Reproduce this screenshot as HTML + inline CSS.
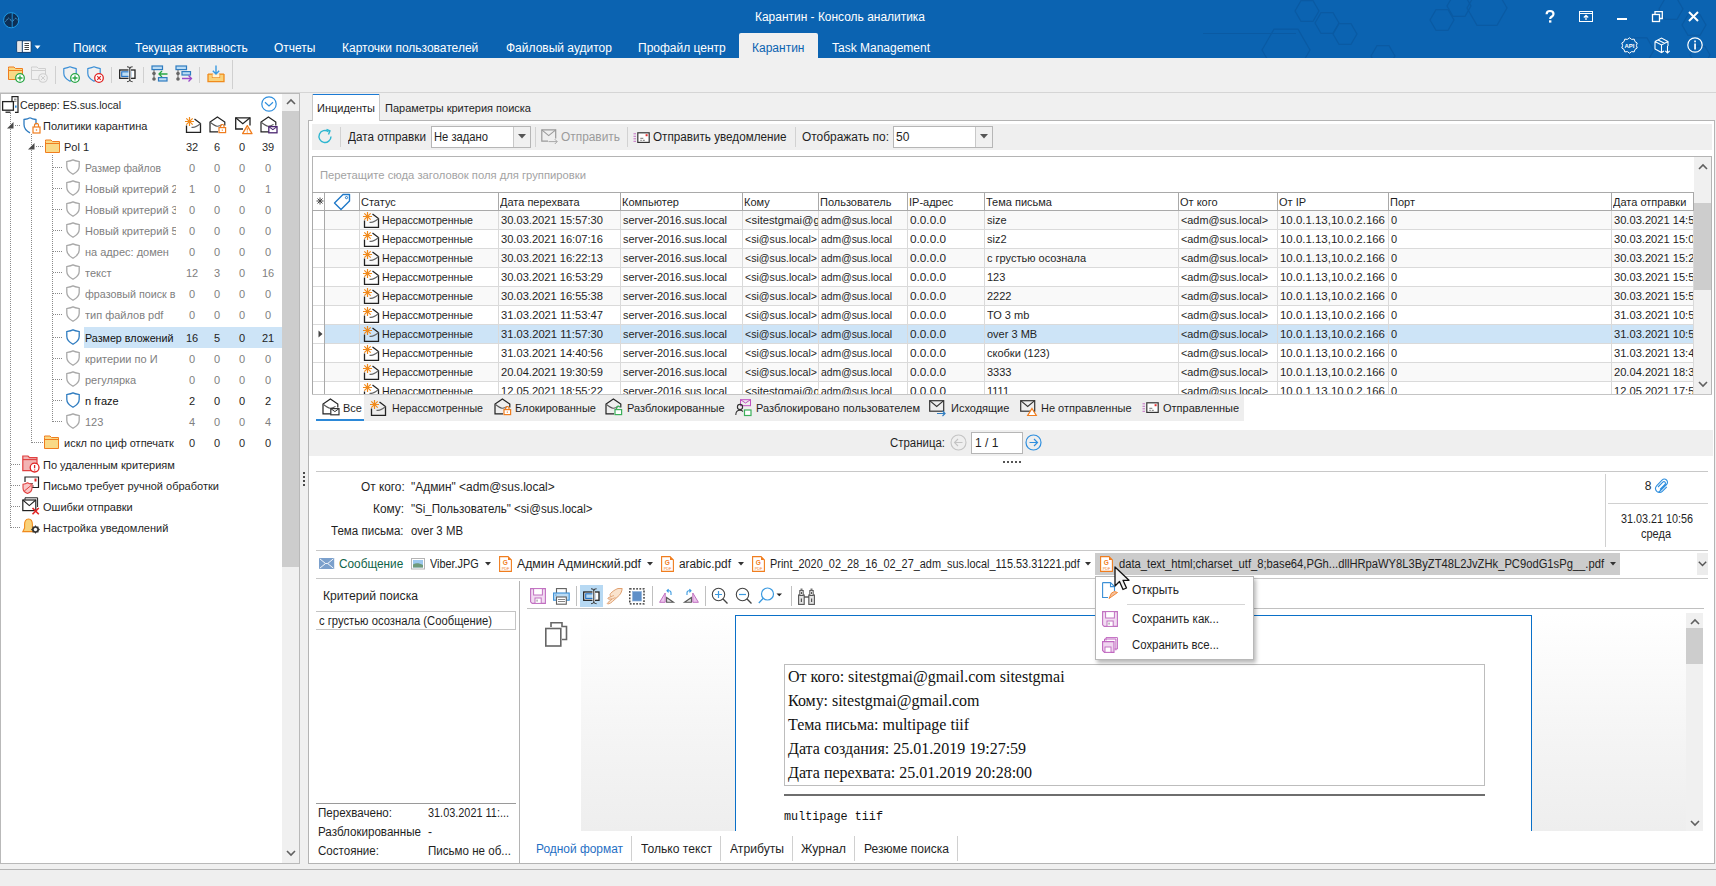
<!DOCTYPE html><html><head><meta charset="utf-8"><title>Карантин - Консоль аналитика</title><style>
*{margin:0;padding:0;box-sizing:border-box}
html,body{width:1716px;height:886px;overflow:hidden;background:#f0f0f0;font-family:"Liberation Sans",sans-serif}
.a{position:absolute}
.t{position:absolute;white-space:pre;line-height:1;transform-origin:0 0}
svg.a{overflow:visible}
</style></head><body><div class="a" style="left:0px;top:0px;width:1716px;height:58px;background:#0b63b1"></div>
<svg class="a" style="left:0;top:0" width="1716" height="58"><g fill="none" stroke="#0a5aa3" stroke-width="1.2"><path d="M1319.0,11.0 L1313.0,21.4 L1301.0,21.4 L1295.0,11.0 L1301.0,0.6 L1313.0,0.6 Z"/><path d="M1339.0,23.0 L1333.0,33.4 L1321.0,33.4 L1315.0,23.0 L1321.0,12.6 L1333.0,12.6 Z"/><path d="M1357.0,34.0 L1351.0,44.4 L1339.0,44.4 L1333.0,34.0 L1339.0,23.6 L1351.0,23.6 Z"/><path d="M1310.0,50.0 L1298.0,70.8 L1274.0,70.8 L1262.0,50.0 L1274.0,29.2 L1298.0,29.2 Z"/><path d="M1395.0,56.0 L1389.0,66.4 L1377.0,66.4 L1371.0,56.0 L1377.0,45.6 L1389.0,45.6 Z"/><path d="M1454.0,20.0 L1448.0,30.4 L1436.0,30.4 L1430.0,20.0 L1436.0,9.6 L1448.0,9.6 Z"/><path d="M1471.0,6.0 L1465.0,16.4 L1453.0,16.4 L1447.0,6.0 L1453.0,-4.4 L1465.0,-4.4 Z"/><path d="M1507.0,8.0 L1497.0,25.3 L1477.0,25.3 L1467.0,8.0 L1477.0,-9.3 L1497.0,-9.3 Z"/><path d="M1683.0,9.0 L1677.0,19.4 L1665.0,19.4 L1659.0,9.0 L1665.0,-1.4 L1677.0,-1.4 Z"/><path d="M1706.0,25.0 L1700.0,35.4 L1688.0,35.4 L1682.0,25.0 L1688.0,14.6 L1700.0,14.6 Z"/><path d="M1654.0,50.0 L1647.0,62.1 L1633.0,62.1 L1626.0,50.0 L1633.0,37.9 L1647.0,37.9 Z"/><path d="M1710.0,55.0 L1705.0,63.7 L1695.0,63.7 L1690.0,55.0 L1695.0,46.3 L1705.0,46.3 Z"/><path d="M1203 33.5 L1296 33.5"/></g></svg>
<svg class="a" style="left:2px;top:11px;" width="18" height="18" viewBox="0 0 18 18"><circle cx="9.2" cy="9.2" r="7.6" fill="#0d2f55" stroke="#1e9be8" stroke-width="1"/><path d="M10.2 1.8 V16.6" stroke="#1e9be8" stroke-width="0.9"/><path d="M3.5 10.5 L6.5 7 L10.2 10.5 L13.8 7 L16 9.5" fill="none" stroke="#58b6f0" stroke-width="1" stroke-dasharray="1.3 0.9"/></svg>
<span class="t" style="left:755px;top:10.84px;font-size:12px;color:#ffffff;transform:scaleX(0.9963);">Карантин - Консоль аналитика</span>
<svg class="a" style="left:1544px;top:10px;" width="12" height="13" viewBox="0 0 12 13"><path d="M2.6 4.3 C2.6 2 4 1 6 1 C8.2 1 9.5 2.2 9.5 4 C9.5 5.8 8 6.4 7 7.2 C6.4 7.7 6.2 8 6.2 9" fill="none" stroke="#fff" stroke-width="2.2"/><rect x="5" y="10.3" width="2.4" height="2.3" fill="#fff"/></svg>
<svg class="a" style="left:1579px;top:11px;" width="14" height="11" viewBox="0 0 14 11"><rect x="0.5" y="0.5" width="13" height="10" fill="none" stroke="#fff"/><path d="M0.5 2.5 H13.5" stroke="#fff"/><path d="M7 9 V4.5 M4.8 6.5 L7 4.3 L9.2 6.5" stroke="#fff" fill="none" stroke-width="1.2"/></svg>
<div class="a" style="left:1617px;top:18px;width:10px;height:2px;background:#fff"></div>
<svg class="a" style="left:1652px;top:11px;" width="11" height="11" viewBox="0 0 11 11"><rect x="0.5" y="3.5" width="7" height="7" fill="none" stroke="#fff" stroke-width="1.3"/><path d="M3 3.5 V0.7 H10.3 V7.5 H7.5" fill="none" stroke="#fff" stroke-width="1.3"/></svg>
<svg class="a" style="left:1688px;top:11px;" width="11" height="11" viewBox="0 0 11 11"><path d="M1 1 L10 10 M10 1 L1 10" stroke="#fff" stroke-width="2"/></svg>
<svg class="a" style="left:1621px;top:37px;" width="17" height="17" viewBox="0 0 17 17"><path d="M8.5 0.8 L10.6 2.4 L13.2 2.1 L14 4.6 L16.2 6 L15.4 8.5 L16.2 11 L14 12.4 L13.2 14.9 L10.6 14.6 L8.5 16.2 L6.4 14.6 L3.8 14.9 L3 12.4 L0.8 11 L1.6 8.5 L0.8 6 L3 4.6 L3.8 2.1 L6.4 2.4 Z" fill="none" stroke="#fff" stroke-width="1"/><text x="8.5" y="11" font-size="6" font-weight="bold" fill="#fff" text-anchor="middle" font-family="Liberation Sans">API</text></svg>
<svg class="a" style="left:1654px;top:37px;" width="17" height="17" viewBox="0 0 17 17"><path d="M1 4.5 L7.5 1 L14 4.5 L14 9 M1 4.5 L1 12 L7.5 15.5 L10 14 M1 4.5 L7.5 8 L14 4.5 M7.5 8 V15.5 M4 3 L10.5 6.3" fill="none" stroke="#fff" stroke-width="1.1"/><path d="M13.5 9 V16 M11.3 13.8 L13.5 16 L15.7 13.8" fill="none" stroke="#fff" stroke-width="1.1"/></svg>
<svg class="a" style="left:1687px;top:37px;" width="16" height="16" viewBox="0 0 16 16"><circle cx="8" cy="8" r="7.2" fill="none" stroke="#fff" stroke-width="1.2"/><rect x="7.2" y="6.5" width="1.7" height="6" fill="#fff"/><rect x="7.2" y="3.5" width="1.7" height="1.8" fill="#fff"/></svg>
<svg class="a" style="left:16px;top:40px;" width="26" height="13" viewBox="0 0 26 13"><rect x="0.8" y="0.8" width="14.4" height="11.6" rx="1" fill="#fff" stroke="#0b3a6e" stroke-width="1"/><rect x="1.5" y="1.5" width="4.5" height="10.2" fill="#e6e6e6"/><rect x="5.8" y="0.8" width="1" height="11.6" fill="#0b3a6e"/><path d="M8.5 3.5 H13 M8.5 5.5 H13 M8.5 7.5 H13 M8.5 9.5 H13" stroke="#444" stroke-width="1"/><path d="M18.5 5.5 H24.5 L21.5 9 Z" fill="#fff"/></svg>
<span class="t" style="left:73px;top:41.84px;font-size:12px;color:#ffffff;">Поиск</span>
<span class="t" style="left:135px;top:41.84px;font-size:12px;color:#ffffff;">Текущая активность</span>
<span class="t" style="left:274px;top:41.84px;font-size:12px;color:#ffffff;">Отчеты</span>
<span class="t" style="left:342px;top:41.84px;font-size:12px;color:#ffffff;">Карточки пользователей</span>
<span class="t" style="left:506px;top:41.84px;font-size:12px;color:#ffffff;">Файловый аудитор</span>
<span class="t" style="left:638px;top:41.84px;font-size:12px;color:#ffffff;">Профайл центр</span>
<span class="t" style="left:832px;top:41.84px;font-size:12px;color:#ffffff;">Task Management</span>
<div class="a" style="left:739px;top:33px;width:79px;height:25px;background:#f0f0f0;border-radius:2px 2px 0 0"></div>
<span class="t" style="left:752px;top:41.84px;font-size:12px;color:#0b63b1;">Карантин</span>
<div class="a" style="left:0px;top:58px;width:1716px;height:34px;background:#f0f0f0"></div>
<div class="a" style="left:0px;top:92px;width:1716px;height:1px;background:#d5d5d5"></div>
<svg class="a" style="left:8px;top:66px;" width="16" height="14" viewBox="0 0 16 14"><path d="M0.5 2.5 V1 H6 L7.5 2.5 H14.5 V13.5 H0.5 Z" fill="#f9d986" stroke="#f07d1e" stroke-width="1"/><path d="M0.5 4.5 H14.5" stroke="#f07d1e" stroke-width="1"/></svg>
<svg class="a" style="left:15px;top:73px;" width="10" height="10" viewBox="0 0 10 10"><circle cx="5" cy="5" r="4.3" fill="#fff" stroke="#27a644" stroke-width="1.3"/><path d="M5 2.5 V7.5 M2.5 5 H7.5" stroke="#27a644" stroke-width="1.3"/></svg>
<svg class="a" style="left:31px;top:66px;" width="16" height="14" viewBox="0 0 16 14"><path d="M0.5 2.5 V1 H6 L7.5 2.5 H14.5 V13.5 H0.5 Z" fill="none" stroke="#cfcfcf" stroke-width="1"/><path d="M0.5 4.5 H14.5" stroke="#cfcfcf"/></svg>
<svg class="a" style="left:38px;top:73px;" width="10" height="10" viewBox="0 0 10 10"><circle cx="5" cy="5" r="4.3" fill="#f0f0f0" stroke="#cfcfcf" stroke-width="1.1"/><path d="M3 3 L7 7 M7 3 L3 7" stroke="#cfcfcf"/></svg>
<div class="a" style="left:55px;top:66px;width:1px;height:18px;background:#d0d0d0"></div>
<svg class="a" style="left:63px;top:66px;" width="14" height="16" viewBox="0 0 14 16"><path d="M7.0 0.8 C9.799999999999999 2 12.5 2.4 13.2 2.6 V7.2 C13.2 12.0 9.799999999999999 13.5 7.0 15.2 C4.2 13.5 0.8 12.0 0.8 7.2 V2.6 C1.5 2.4 4.2 2 7.0 0.8 Z" fill="none" stroke="#3b8fd6" stroke-width="1.2"/></svg>
<svg class="a" style="left:70px;top:73px;" width="10" height="10" viewBox="0 0 10 10"><circle cx="5" cy="5" r="4.3" fill="#fff" stroke="#27a644" stroke-width="1.3"/><path d="M5 2.5 V7.5 M2.5 5 H7.5" stroke="#27a644" stroke-width="1.3"/></svg>
<svg class="a" style="left:87px;top:66px;" width="14" height="16" viewBox="0 0 14 16"><path d="M7.0 0.8 C9.799999999999999 2 12.5 2.4 13.2 2.6 V7.2 C13.2 12.0 9.799999999999999 13.5 7.0 15.2 C4.2 13.5 0.8 12.0 0.8 7.2 V2.6 C1.5 2.4 4.2 2 7.0 0.8 Z" fill="none" stroke="#3b8fd6" stroke-width="1.2"/></svg>
<svg class="a" style="left:94px;top:73px;" width="10" height="10" viewBox="0 0 10 10"><circle cx="5" cy="5" r="4.3" fill="#fff" stroke="#e02424" stroke-width="1.3"/><path d="M3.2 3.2 L6.8 6.8 M6.8 3.2 L3.2 6.8" stroke="#e02424" stroke-width="1.2"/></svg>
<div class="a" style="left:111px;top:67px;width:1px;height:16px;background:#d0d0d0"></div>
<svg class="a" style="left:119px;top:66px;" width="17" height="17" viewBox="0 0 17 17"><rect x="0.7" y="4" width="15.3" height="8.3" fill="#fff" stroke="#222" stroke-width="1.3"/><rect x="2.7" y="5.8" width="9" height="4.6" fill="#bcdcf4" stroke="#1f6fc4" stroke-width="1.1"/><rect x="9.5" y="3" width="2.5" height="10.5" fill="#f0f0f0"/><path d="M8 0.8 C9.5 0.8 10.5 1.2 10.8 2.5 V14 C10.5 15.3 9.5 15.7 8 15.7 M13.6 0.8 C12.1 0.8 11.1 1.2 10.8 2.5 M13.6 15.7 C12.1 15.7 11.1 15.3 10.8 14" fill="none" stroke="#333" stroke-width="1.1"/></svg>
<div class="a" style="left:143px;top:67px;width:1px;height:16px;background:#d0d0d0"></div>
<svg class="a" style="left:151px;top:65px;" width="18" height="18" viewBox="0 0 18 18"><rect x="1" y="1" width="10.5" height="3.6" fill="#bcdcf4" stroke="#2f7cc0" stroke-width="1.2"/><path d="M3 5 V14" stroke="#666" stroke-width="1"/><circle cx="3" cy="8.5" r="1.8" fill="#666"/><circle cx="3" cy="14" r="1.8" fill="#666"/><path d="M8 9 H16.5 M11 6 L8 9 L11 12" fill="none" stroke="#27a644" stroke-width="1.3"/><rect x="7.5" y="12.6" width="8.5" height="3.4" fill="#bcdcf4" stroke="#2f7cc0" stroke-width="1.2"/></svg>
<svg class="a" style="left:175px;top:65px;" width="18" height="18" viewBox="0 0 18 18"><rect x="1" y="1" width="10.5" height="3.6" fill="#bcdcf4" stroke="#2f7cc0" stroke-width="1.2"/><path d="M3 5 V14" stroke="#666" stroke-width="1"/><circle cx="3" cy="8.5" r="1.8" fill="#666"/><circle cx="3" cy="14" r="1.8" fill="#666"/><rect x="7" y="6.6" width="8.5" height="3.4" fill="#bcdcf4" stroke="#2f7cc0" stroke-width="1.2"/><path d="M7 13.5 H16.5 M13.5 10.5 L16.5 13.5 L13.5 16.5" fill="none" stroke="#9a4ac8" stroke-width="1.3"/></svg>
<div class="a" style="left:199px;top:67px;width:1px;height:16px;background:#d0d0d0"></div>
<svg class="a" style="left:207px;top:65px;" width="18" height="18" viewBox="0 0 18 18"><path d="M1 9 V16.6 H17 V9" fill="#f9d27a" stroke="#f08a1c" stroke-width="1.3"/><path d="M1 9.2 H5.5 V12.3 H12.5 V9.2 H17" fill="none" stroke="#f08a1c" stroke-width="1.3"/><rect x="5.5" y="9.2" width="7" height="3.1" fill="#fff3d6"/><path d="M9 0.5 V9 M5.8 5.8 L9 9 L12.2 5.8" stroke="#3b9ae0" stroke-width="1.4" fill="none"/></svg>
<div class="a" style="left:232px;top:60px;width:1px;height:29px;background:#d0d0d0"></div>
<div class="a" style="left:0px;top:93px;width:300px;height:771px;background:#ffffff;border:1px solid #b9b9b9"></div>
<div class="a" style="left:282px;top:94px;width:17px;height:769px;background:#f0f0f0"></div>
<div class="a" style="left:282px;top:111px;width:17px;height:456px;background:#cdcdcd"></div>
<svg class="a" style="left:286px;top:98px;" width="10" height="7" viewBox="0 0 10 7"><path d="M1 6 L5 2 L9 6" fill="none" stroke="#606060" stroke-width="1.6"/></svg>
<svg class="a" style="left:286px;top:850px;" width="10" height="7" viewBox="0 0 10 7"><path d="M1 1 L5 5 L9 1" fill="none" stroke="#606060" stroke-width="1.6"/></svg>
<svg class="a" style="left:1px;top:96px;" width="18" height="17" viewBox="0 0 18 17"><path d="M11 5 V0.7 H17 V16.3 H14" fill="none" stroke="#222" stroke-width="1.2"/><path d="M13 3.2 H15.5 M13 5.2 H15.5" stroke="#555" stroke-width="0.9"/><rect x="14" y="9.5" width="1.6" height="2.2" fill="#2f8fde"/><rect x="1.6" y="5.6" width="10.8" height="8.6" fill="#fff" stroke="#222" stroke-width="1.3"/><path d="M4.5 16.2 H9.5" stroke="#222" stroke-width="1.3"/></svg>
<span class="t" style="left:20px;top:99.69px;font-size:11px;color:#1f1f1f;transform:scaleX(0.9639);">Сервер: ES.sus.local</span>
<svg class="a" style="left:261px;top:96px;" width="16" height="16" viewBox="0 0 16 16"><circle cx="8" cy="8" r="7.2" fill="none" stroke="#2f8fde" stroke-width="1.2"/><path d="M4 6.3 L8 10 L12 6.3" fill="none" stroke="#2f8fde" stroke-width="1.2"/></svg>
<div class="a" style="left:10px;top:113px;width:1px;height:415px;background:repeating-linear-gradient(to bottom,#8a8a8a 0 1px,transparent 1px 2px)"></div>
<div class="a" style="left:31px;top:134px;width:1px;height:310px;background:repeating-linear-gradient(to bottom,#8a8a8a 0 1px,transparent 1px 2px)"></div>
<div class="a" style="left:52px;top:155px;width:1px;height:267px;background:repeating-linear-gradient(to bottom,#8a8a8a 0 1px,transparent 1px 2px)"></div>
<div class="a" style="left:15px;top:125px;width:6px;height:1px;background:repeating-linear-gradient(to right,#8a8a8a 0 1px,transparent 1px 2px)"></div>
<div class="a" style="left:36px;top:146px;width:7px;height:1px;background:repeating-linear-gradient(to right,#8a8a8a 0 1px,transparent 1px 2px)"></div>
<div class="a" style="left:53px;top:167px;width:10px;height:1px;background:repeating-linear-gradient(to right,#8a8a8a 0 1px,transparent 1px 2px)"></div>
<div class="a" style="left:53px;top:188px;width:10px;height:1px;background:repeating-linear-gradient(to right,#8a8a8a 0 1px,transparent 1px 2px)"></div>
<div class="a" style="left:53px;top:209px;width:10px;height:1px;background:repeating-linear-gradient(to right,#8a8a8a 0 1px,transparent 1px 2px)"></div>
<div class="a" style="left:53px;top:230px;width:10px;height:1px;background:repeating-linear-gradient(to right,#8a8a8a 0 1px,transparent 1px 2px)"></div>
<div class="a" style="left:53px;top:251px;width:10px;height:1px;background:repeating-linear-gradient(to right,#8a8a8a 0 1px,transparent 1px 2px)"></div>
<div class="a" style="left:53px;top:272px;width:10px;height:1px;background:repeating-linear-gradient(to right,#8a8a8a 0 1px,transparent 1px 2px)"></div>
<div class="a" style="left:53px;top:293px;width:10px;height:1px;background:repeating-linear-gradient(to right,#8a8a8a 0 1px,transparent 1px 2px)"></div>
<div class="a" style="left:53px;top:314px;width:10px;height:1px;background:repeating-linear-gradient(to right,#8a8a8a 0 1px,transparent 1px 2px)"></div>
<div class="a" style="left:53px;top:337px;width:10px;height:1px;background:repeating-linear-gradient(to right,#8a8a8a 0 1px,transparent 1px 2px)"></div>
<div class="a" style="left:53px;top:358px;width:10px;height:1px;background:repeating-linear-gradient(to right,#8a8a8a 0 1px,transparent 1px 2px)"></div>
<div class="a" style="left:53px;top:379px;width:10px;height:1px;background:repeating-linear-gradient(to right,#8a8a8a 0 1px,transparent 1px 2px)"></div>
<div class="a" style="left:53px;top:400px;width:10px;height:1px;background:repeating-linear-gradient(to right,#8a8a8a 0 1px,transparent 1px 2px)"></div>
<div class="a" style="left:53px;top:421px;width:10px;height:1px;background:repeating-linear-gradient(to right,#8a8a8a 0 1px,transparent 1px 2px)"></div>
<div class="a" style="left:32px;top:442px;width:11px;height:1px;background:repeating-linear-gradient(to right,#8a8a8a 0 1px,transparent 1px 2px)"></div>
<div class="a" style="left:11px;top:464px;width:10px;height:1px;background:repeating-linear-gradient(to right,#8a8a8a 0 1px,transparent 1px 2px)"></div>
<div class="a" style="left:11px;top:485px;width:10px;height:1px;background:repeating-linear-gradient(to right,#8a8a8a 0 1px,transparent 1px 2px)"></div>
<div class="a" style="left:11px;top:506px;width:10px;height:1px;background:repeating-linear-gradient(to right,#8a8a8a 0 1px,transparent 1px 2px)"></div>
<div class="a" style="left:11px;top:527px;width:10px;height:1px;background:repeating-linear-gradient(to right,#8a8a8a 0 1px,transparent 1px 2px)"></div>
<svg class="a" style="left:7px;top:122px;" width="7" height="7" viewBox="0 0 7 7"><path d="M6.5 0 V6.5 H0 Z" fill="#4a4a4a"/></svg>
<svg class="a" style="left:28px;top:143px;" width="7" height="7" viewBox="0 0 7 7"><path d="M6.5 0 V6.5 H0 Z" fill="#4a4a4a"/></svg>
<svg class="a" style="left:23px;top:117px;" width="18" height="17" viewBox="0 0 18 17"><path d="M7 0.8 C9 2 11 2.3 13 2.5 V7.5 M7 0.8 C5 2 3 2.3 1 2.5 V7.5 C1 11.5 3.5 14 7 15.8" fill="none" stroke="#2f7cc0" stroke-width="1.3"/><rect x="10" y="10" width="7" height="6" fill="#fff" stroke="#f07d1e" stroke-width="1.2"/><path d="M11.5 10 V8.3 A2 2 0 0 1 15.5 8.3 V10" fill="none" stroke="#f07d1e" stroke-width="1.2"/><circle cx="13.5" cy="13" r="0.8" fill="#f07d1e"/></svg>
<span class="t" style="left:43px;top:120.69px;font-size:11px;color:#1f1f1f;">Политики карантина</span>
<svg class="a" style="left:184px;top:116px;" width="18" height="18" viewBox="0 0 18 18"><path d="M2.5 9.5 V16.3 H16.5 V7.5 L10.5 3" stroke="#222" stroke-width="1.3" fill="none"/><path d="M7.5 11.2 C10 12.2 12.5 11 16.5 7.5" stroke="#666" stroke-width="1.2" fill="none"/><path d="M5.5 1 V10 M1 5.5 H10 M2.3 2.3 L8.7 8.7 M8.7 2.3 L2.3 8.7" stroke="#f08a1c" stroke-width="1.2"/></svg>
<svg class="a" style="left:209px;top:116px;" width="18" height="18" viewBox="0 0 18 18"><path d="M9 15.8 H1 V6 L8.4 1 L15.8 6 V9.5" fill="none" stroke="#222" stroke-width="1.2"/><path d="M1.5 6.5 C4 8.5 6 10 8 10.3 C10 10.5 11.5 9.8 13.5 8.4" fill="none" stroke="#555" stroke-width="1.1"/><rect x="10" y="11.6" width="6.6" height="5" fill="#fff" stroke="#f07d1e" stroke-width="1.2"/><path d="M11.6 11.6 V10.2 A1.7 1.7 0 0 1 15 10.2 V11.6" fill="none" stroke="#f07d1e" stroke-width="1.2"/><rect x="12.8" y="13.5" width="1" height="1.3" fill="#f07d1e"/></svg>
<svg class="a" style="left:235px;top:117px;" width="18" height="18" viewBox="0 0 18 18"><path d="M8 12 H0.7 V0.8 H15 V8.5" fill="none" stroke="#222" stroke-width="1.3"/><path d="M0.7 0.8 L7.8 6.8 L15 0.8" fill="none" stroke="#222" stroke-width="1.2"/><path d="M12.3 8.6 L17 16.6 H7.6 Z" fill="#fff" stroke="#f07d1e" stroke-width="1.3" stroke-linejoin="round"/><path d="M12.3 11.3 V13.6 M12.3 14.6 V15.5" stroke="#f07d1e" stroke-width="1.1"/></svg>
<svg class="a" style="left:260px;top:116px;" width="18" height="18" viewBox="0 0 18 18"><path d="M9 15.8 H1 V6 L8.4 1 L15.8 6 V9.5" fill="none" stroke="#222" stroke-width="1.2"/><path d="M1.5 6.5 C4 8.5 6 10 8 10.3 C10 10.5 11.5 9.8 13.5 8.4" fill="none" stroke="#555" stroke-width="1.1"/><rect x="8.8" y="10.6" width="8.2" height="6.2" fill="#fff" stroke="#4b2670" stroke-width="1.3"/><path d="M8.8 10.6 L12.9 13.6 L17 10.6" fill="none" stroke="#4b2670" stroke-width="1.1"/></svg>
<svg class="a" style="left:45px;top:139px;" width="16" height="14" viewBox="0 0 16 14"><path d="M0.5 2.5 V1 H6 L7.5 2.5 H14.5 V13.5 H0.5 Z" fill="#f9d986" stroke="#f07d1e" stroke-width="1"/><path d="M0.5 4.5 H14.5" stroke="#f07d1e" stroke-width="1"/></svg>
<span class="t" style="left:64px;top:141.69px;font-size:11px;color:#1f1f1f;">Pol 1</span>
<span class="t" style="left:-308px;width:1000px;text-align:center;top:141.69px;font-size:11px;color:#2a2a2a;transform-origin:50% 0;">32</span>
<span class="t" style="left:-283px;width:1000px;text-align:center;top:141.69px;font-size:11px;color:#2a2a2a;transform-origin:50% 0;">6</span>
<span class="t" style="left:-258px;width:1000px;text-align:center;top:141.69px;font-size:11px;color:#2a2a2a;transform-origin:50% 0;">0</span>
<span class="t" style="left:-232px;width:1000px;text-align:center;top:141.69px;font-size:11px;color:#2a2a2a;transform-origin:50% 0;">39</span>
<svg class="a" style="left:66px;top:159px;" width="14" height="16" viewBox="0 0 14 16"><path d="M7.0 0.8 C9.799999999999999 2 12.5 2.4 13.2 2.6 V7.2 C13.2 12.0 9.799999999999999 13.5 7.0 15.2 C4.2 13.5 0.8 12.0 0.8 7.2 V2.6 C1.5 2.4 4.2 2 7.0 0.8 Z" fill="none" stroke="#a8a8a8" stroke-width="1.3"/></svg>
<div class="a" style="left:85px;top:159.69px;width:91px;height:17px;overflow:hidden"><span class="t" style="left:0;top:3px;font-size:11px;color:#808080;transform:scaleX(0.9419);">Размер файлов</span></div>
<span class="t" style="left:-308px;width:1000px;text-align:center;top:162.69px;font-size:11px;color:#808080;transform-origin:50% 0;">0</span>
<span class="t" style="left:-283px;width:1000px;text-align:center;top:162.69px;font-size:11px;color:#808080;transform-origin:50% 0;">0</span>
<span class="t" style="left:-258px;width:1000px;text-align:center;top:162.69px;font-size:11px;color:#808080;transform-origin:50% 0;">0</span>
<span class="t" style="left:-232px;width:1000px;text-align:center;top:162.69px;font-size:11px;color:#808080;transform-origin:50% 0;">0</span>
<svg class="a" style="left:66px;top:180px;" width="14" height="16" viewBox="0 0 14 16"><path d="M7.0 0.8 C9.799999999999999 2 12.5 2.4 13.2 2.6 V7.2 C13.2 12.0 9.799999999999999 13.5 7.0 15.2 C4.2 13.5 0.8 12.0 0.8 7.2 V2.6 C1.5 2.4 4.2 2 7.0 0.8 Z" fill="none" stroke="#a8a8a8" stroke-width="1.3"/></svg>
<div class="a" style="left:85px;top:180.69px;width:91px;height:17px;overflow:hidden"><span class="t" style="left:0;top:3px;font-size:11px;color:#808080;">Новый критерий 2</span></div>
<span class="t" style="left:-308px;width:1000px;text-align:center;top:183.69px;font-size:11px;color:#808080;transform-origin:50% 0;">1</span>
<span class="t" style="left:-283px;width:1000px;text-align:center;top:183.69px;font-size:11px;color:#808080;transform-origin:50% 0;">0</span>
<span class="t" style="left:-258px;width:1000px;text-align:center;top:183.69px;font-size:11px;color:#808080;transform-origin:50% 0;">0</span>
<span class="t" style="left:-232px;width:1000px;text-align:center;top:183.69px;font-size:11px;color:#808080;transform-origin:50% 0;">1</span>
<svg class="a" style="left:66px;top:201px;" width="14" height="16" viewBox="0 0 14 16"><path d="M7.0 0.8 C9.799999999999999 2 12.5 2.4 13.2 2.6 V7.2 C13.2 12.0 9.799999999999999 13.5 7.0 15.2 C4.2 13.5 0.8 12.0 0.8 7.2 V2.6 C1.5 2.4 4.2 2 7.0 0.8 Z" fill="none" stroke="#a8a8a8" stroke-width="1.3"/></svg>
<div class="a" style="left:85px;top:201.69px;width:91px;height:17px;overflow:hidden"><span class="t" style="left:0;top:3px;font-size:11px;color:#808080;">Новый критерий 3</span></div>
<span class="t" style="left:-308px;width:1000px;text-align:center;top:204.69px;font-size:11px;color:#808080;transform-origin:50% 0;">0</span>
<span class="t" style="left:-283px;width:1000px;text-align:center;top:204.69px;font-size:11px;color:#808080;transform-origin:50% 0;">0</span>
<span class="t" style="left:-258px;width:1000px;text-align:center;top:204.69px;font-size:11px;color:#808080;transform-origin:50% 0;">0</span>
<span class="t" style="left:-232px;width:1000px;text-align:center;top:204.69px;font-size:11px;color:#808080;transform-origin:50% 0;">0</span>
<svg class="a" style="left:66px;top:222px;" width="14" height="16" viewBox="0 0 14 16"><path d="M7.0 0.8 C9.799999999999999 2 12.5 2.4 13.2 2.6 V7.2 C13.2 12.0 9.799999999999999 13.5 7.0 15.2 C4.2 13.5 0.8 12.0 0.8 7.2 V2.6 C1.5 2.4 4.2 2 7.0 0.8 Z" fill="none" stroke="#a8a8a8" stroke-width="1.3"/></svg>
<div class="a" style="left:85px;top:222.69px;width:91px;height:17px;overflow:hidden"><span class="t" style="left:0;top:3px;font-size:11px;color:#808080;">Новый критерий 5</span></div>
<span class="t" style="left:-308px;width:1000px;text-align:center;top:225.69px;font-size:11px;color:#808080;transform-origin:50% 0;">0</span>
<span class="t" style="left:-283px;width:1000px;text-align:center;top:225.69px;font-size:11px;color:#808080;transform-origin:50% 0;">0</span>
<span class="t" style="left:-258px;width:1000px;text-align:center;top:225.69px;font-size:11px;color:#808080;transform-origin:50% 0;">0</span>
<span class="t" style="left:-232px;width:1000px;text-align:center;top:225.69px;font-size:11px;color:#808080;transform-origin:50% 0;">0</span>
<svg class="a" style="left:66px;top:243px;" width="14" height="16" viewBox="0 0 14 16"><path d="M7.0 0.8 C9.799999999999999 2 12.5 2.4 13.2 2.6 V7.2 C13.2 12.0 9.799999999999999 13.5 7.0 15.2 C4.2 13.5 0.8 12.0 0.8 7.2 V2.6 C1.5 2.4 4.2 2 7.0 0.8 Z" fill="none" stroke="#a8a8a8" stroke-width="1.3"/></svg>
<div class="a" style="left:85px;top:243.69px;width:91px;height:17px;overflow:hidden"><span class="t" style="left:0;top:3px;font-size:11px;color:#808080;">на адрес: домен</span></div>
<span class="t" style="left:-308px;width:1000px;text-align:center;top:246.69px;font-size:11px;color:#808080;transform-origin:50% 0;">0</span>
<span class="t" style="left:-283px;width:1000px;text-align:center;top:246.69px;font-size:11px;color:#808080;transform-origin:50% 0;">0</span>
<span class="t" style="left:-258px;width:1000px;text-align:center;top:246.69px;font-size:11px;color:#808080;transform-origin:50% 0;">0</span>
<span class="t" style="left:-232px;width:1000px;text-align:center;top:246.69px;font-size:11px;color:#808080;transform-origin:50% 0;">0</span>
<svg class="a" style="left:66px;top:264px;" width="14" height="16" viewBox="0 0 14 16"><path d="M7.0 0.8 C9.799999999999999 2 12.5 2.4 13.2 2.6 V7.2 C13.2 12.0 9.799999999999999 13.5 7.0 15.2 C4.2 13.5 0.8 12.0 0.8 7.2 V2.6 C1.5 2.4 4.2 2 7.0 0.8 Z" fill="none" stroke="#a8a8a8" stroke-width="1.3"/></svg>
<div class="a" style="left:85px;top:264.69px;width:91px;height:17px;overflow:hidden"><span class="t" style="left:0;top:3px;font-size:11px;color:#808080;">текст</span></div>
<span class="t" style="left:-308px;width:1000px;text-align:center;top:267.69px;font-size:11px;color:#808080;transform-origin:50% 0;">12</span>
<span class="t" style="left:-283px;width:1000px;text-align:center;top:267.69px;font-size:11px;color:#808080;transform-origin:50% 0;">3</span>
<span class="t" style="left:-258px;width:1000px;text-align:center;top:267.69px;font-size:11px;color:#808080;transform-origin:50% 0;">0</span>
<span class="t" style="left:-232px;width:1000px;text-align:center;top:267.69px;font-size:11px;color:#808080;transform-origin:50% 0;">16</span>
<svg class="a" style="left:66px;top:285px;" width="14" height="16" viewBox="0 0 14 16"><path d="M7.0 0.8 C9.799999999999999 2 12.5 2.4 13.2 2.6 V7.2 C13.2 12.0 9.799999999999999 13.5 7.0 15.2 C4.2 13.5 0.8 12.0 0.8 7.2 V2.6 C1.5 2.4 4.2 2 7.0 0.8 Z" fill="none" stroke="#a8a8a8" stroke-width="1.3"/></svg>
<div class="a" style="left:85px;top:285.69px;width:91px;height:17px;overflow:hidden"><span class="t" style="left:0;top:3px;font-size:11px;color:#808080;transform:scaleX(0.9774);">фразовый поиск в</span></div>
<span class="t" style="left:-308px;width:1000px;text-align:center;top:288.69px;font-size:11px;color:#808080;transform-origin:50% 0;">0</span>
<span class="t" style="left:-283px;width:1000px;text-align:center;top:288.69px;font-size:11px;color:#808080;transform-origin:50% 0;">0</span>
<span class="t" style="left:-258px;width:1000px;text-align:center;top:288.69px;font-size:11px;color:#808080;transform-origin:50% 0;">0</span>
<span class="t" style="left:-232px;width:1000px;text-align:center;top:288.69px;font-size:11px;color:#808080;transform-origin:50% 0;">0</span>
<svg class="a" style="left:66px;top:306px;" width="14" height="16" viewBox="0 0 14 16"><path d="M7.0 0.8 C9.799999999999999 2 12.5 2.4 13.2 2.6 V7.2 C13.2 12.0 9.799999999999999 13.5 7.0 15.2 C4.2 13.5 0.8 12.0 0.8 7.2 V2.6 C1.5 2.4 4.2 2 7.0 0.8 Z" fill="none" stroke="#a8a8a8" stroke-width="1.3"/></svg>
<div class="a" style="left:85px;top:306.69px;width:91px;height:17px;overflow:hidden"><span class="t" style="left:0;top:3px;font-size:11px;color:#808080;">тип файлов pdf</span></div>
<span class="t" style="left:-308px;width:1000px;text-align:center;top:309.69px;font-size:11px;color:#808080;transform-origin:50% 0;">0</span>
<span class="t" style="left:-283px;width:1000px;text-align:center;top:309.69px;font-size:11px;color:#808080;transform-origin:50% 0;">0</span>
<span class="t" style="left:-258px;width:1000px;text-align:center;top:309.69px;font-size:11px;color:#808080;transform-origin:50% 0;">0</span>
<span class="t" style="left:-232px;width:1000px;text-align:center;top:309.69px;font-size:11px;color:#808080;transform-origin:50% 0;">0</span>
<div class="a" style="left:84px;top:327px;width:198px;height:21px;background:#cde4f7"></div>
<svg class="a" style="left:66px;top:329px;" width="14" height="16" viewBox="0 0 14 16"><path d="M7.0 0.8 C9.799999999999999 2 12.5 2.4 13.2 2.6 V7.2 C13.2 12.0 9.799999999999999 13.5 7.0 15.2 C4.2 13.5 0.8 12.0 0.8 7.2 V2.6 C1.5 2.4 4.2 2 7.0 0.8 Z" fill="none" stroke="#2f7cc0" stroke-width="1.3"/></svg>
<div class="a" style="left:85px;top:329.69px;width:91px;height:17px;overflow:hidden"><span class="t" style="left:0;top:3px;font-size:11px;color:#111111;transform:scaleX(0.9742);">Размер вложений</span></div>
<span class="t" style="left:-308px;width:1000px;text-align:center;top:332.69px;font-size:11px;color:#222222;transform-origin:50% 0;">16</span>
<span class="t" style="left:-283px;width:1000px;text-align:center;top:332.69px;font-size:11px;color:#222222;transform-origin:50% 0;">5</span>
<span class="t" style="left:-258px;width:1000px;text-align:center;top:332.69px;font-size:11px;color:#222222;transform-origin:50% 0;">0</span>
<span class="t" style="left:-232px;width:1000px;text-align:center;top:332.69px;font-size:11px;color:#222222;transform-origin:50% 0;">21</span>
<svg class="a" style="left:66px;top:350px;" width="14" height="16" viewBox="0 0 14 16"><path d="M7.0 0.8 C9.799999999999999 2 12.5 2.4 13.2 2.6 V7.2 C13.2 12.0 9.799999999999999 13.5 7.0 15.2 C4.2 13.5 0.8 12.0 0.8 7.2 V2.6 C1.5 2.4 4.2 2 7.0 0.8 Z" fill="none" stroke="#a8a8a8" stroke-width="1.3"/></svg>
<div class="a" style="left:85px;top:350.69px;width:91px;height:17px;overflow:hidden"><span class="t" style="left:0;top:3px;font-size:11px;color:#808080;">критерии по И</span></div>
<span class="t" style="left:-308px;width:1000px;text-align:center;top:353.69px;font-size:11px;color:#808080;transform-origin:50% 0;">0</span>
<span class="t" style="left:-283px;width:1000px;text-align:center;top:353.69px;font-size:11px;color:#808080;transform-origin:50% 0;">0</span>
<span class="t" style="left:-258px;width:1000px;text-align:center;top:353.69px;font-size:11px;color:#808080;transform-origin:50% 0;">0</span>
<span class="t" style="left:-232px;width:1000px;text-align:center;top:353.69px;font-size:11px;color:#808080;transform-origin:50% 0;">0</span>
<svg class="a" style="left:66px;top:371px;" width="14" height="16" viewBox="0 0 14 16"><path d="M7.0 0.8 C9.799999999999999 2 12.5 2.4 13.2 2.6 V7.2 C13.2 12.0 9.799999999999999 13.5 7.0 15.2 C4.2 13.5 0.8 12.0 0.8 7.2 V2.6 C1.5 2.4 4.2 2 7.0 0.8 Z" fill="none" stroke="#a8a8a8" stroke-width="1.3"/></svg>
<div class="a" style="left:85px;top:371.69px;width:91px;height:17px;overflow:hidden"><span class="t" style="left:0;top:3px;font-size:11px;color:#808080;">регулярка</span></div>
<span class="t" style="left:-308px;width:1000px;text-align:center;top:374.69px;font-size:11px;color:#808080;transform-origin:50% 0;">0</span>
<span class="t" style="left:-283px;width:1000px;text-align:center;top:374.69px;font-size:11px;color:#808080;transform-origin:50% 0;">0</span>
<span class="t" style="left:-258px;width:1000px;text-align:center;top:374.69px;font-size:11px;color:#808080;transform-origin:50% 0;">0</span>
<span class="t" style="left:-232px;width:1000px;text-align:center;top:374.69px;font-size:11px;color:#808080;transform-origin:50% 0;">0</span>
<svg class="a" style="left:66px;top:392px;" width="14" height="16" viewBox="0 0 14 16"><path d="M7.0 0.8 C9.799999999999999 2 12.5 2.4 13.2 2.6 V7.2 C13.2 12.0 9.799999999999999 13.5 7.0 15.2 C4.2 13.5 0.8 12.0 0.8 7.2 V2.6 C1.5 2.4 4.2 2 7.0 0.8 Z" fill="none" stroke="#2f7cc0" stroke-width="1.3"/></svg>
<div class="a" style="left:85px;top:392.69px;width:91px;height:17px;overflow:hidden"><span class="t" style="left:0;top:3px;font-size:11px;color:#111111;">n fraze</span></div>
<span class="t" style="left:-308px;width:1000px;text-align:center;top:395.69px;font-size:11px;color:#222222;transform-origin:50% 0;">2</span>
<span class="t" style="left:-283px;width:1000px;text-align:center;top:395.69px;font-size:11px;color:#222222;transform-origin:50% 0;">0</span>
<span class="t" style="left:-258px;width:1000px;text-align:center;top:395.69px;font-size:11px;color:#222222;transform-origin:50% 0;">0</span>
<span class="t" style="left:-232px;width:1000px;text-align:center;top:395.69px;font-size:11px;color:#222222;transform-origin:50% 0;">2</span>
<svg class="a" style="left:66px;top:413px;" width="14" height="16" viewBox="0 0 14 16"><path d="M7.0 0.8 C9.799999999999999 2 12.5 2.4 13.2 2.6 V7.2 C13.2 12.0 9.799999999999999 13.5 7.0 15.2 C4.2 13.5 0.8 12.0 0.8 7.2 V2.6 C1.5 2.4 4.2 2 7.0 0.8 Z" fill="none" stroke="#a8a8a8" stroke-width="1.3"/></svg>
<div class="a" style="left:85px;top:413.69px;width:91px;height:17px;overflow:hidden"><span class="t" style="left:0;top:3px;font-size:11px;color:#808080;">123</span></div>
<span class="t" style="left:-308px;width:1000px;text-align:center;top:416.69px;font-size:11px;color:#808080;transform-origin:50% 0;">4</span>
<span class="t" style="left:-283px;width:1000px;text-align:center;top:416.69px;font-size:11px;color:#808080;transform-origin:50% 0;">0</span>
<span class="t" style="left:-258px;width:1000px;text-align:center;top:416.69px;font-size:11px;color:#808080;transform-origin:50% 0;">0</span>
<span class="t" style="left:-232px;width:1000px;text-align:center;top:416.69px;font-size:11px;color:#808080;transform-origin:50% 0;">4</span>
<svg class="a" style="left:44px;top:435px;" width="16" height="14" viewBox="0 0 16 14"><path d="M0.5 2.5 V1 H6 L7.5 2.5 H14.5 V13.5 H0.5 Z" fill="#f9d986" stroke="#f07d1e" stroke-width="1"/><path d="M0.5 4.5 H14.5" stroke="#f07d1e" stroke-width="1"/></svg>
<div class="a" style="left:64px;top:434.69px;width:113px;height:17px;overflow:hidden"><span class="t" style="left:0;top:3px;font-size:11px;color:#1f1f1f;">искл по циф отпечатк</span></div>
<span class="t" style="left:-308px;width:1000px;text-align:center;top:437.69px;font-size:11px;color:#2a2a2a;transform-origin:50% 0;">0</span>
<span class="t" style="left:-283px;width:1000px;text-align:center;top:437.69px;font-size:11px;color:#2a2a2a;transform-origin:50% 0;">0</span>
<span class="t" style="left:-258px;width:1000px;text-align:center;top:437.69px;font-size:11px;color:#2a2a2a;transform-origin:50% 0;">0</span>
<span class="t" style="left:-232px;width:1000px;text-align:center;top:437.69px;font-size:11px;color:#2a2a2a;transform-origin:50% 0;">0</span>
<svg class="a" style="left:22px;top:455px;" width="18" height="18" viewBox="0 0 18 18"><path d="M0.8 15.6 V1 H6 L7.6 2.6 H15 V15.6 Z" fill="#f2b4b4" stroke="#e04040" stroke-width="1.2"/><path d="M0.8 4.6 H15" stroke="#e04040" stroke-width="1.1"/><circle cx="12.6" cy="12.6" r="4.4" fill="#fff" stroke="#e02424" stroke-width="1.3"/><path d="M12.6 10 V13.2 M12.6 14.4 V15.4" stroke="#e02424" stroke-width="1.3"/></svg>
<span class="t" style="left:43px;top:459.69px;font-size:11px;color:#1f1f1f;">По удаленным критериям</span>
<svg class="a" style="left:22px;top:476px;" width="18" height="18" viewBox="0 0 18 18"><path d="M3 6 V1 H16.5 V11.5 H10" fill="none" stroke="#222" stroke-width="1.2"/><rect x="12.5" y="2.5" width="2" height="3" fill="#e02424"/><path d="M8 7.5 H11 M9 10 H12" stroke="#555" stroke-width="0.9"/><path d="M5.5 6.8 C7 7.8 8.6 8.2 10 8.3 V12 C10 15 8 16.6 5.5 17.5 C3 16.6 1 15 1 12 V8.3 C2.4 8.2 4 7.8 5.5 6.8 Z" fill="#f9c6c6" stroke="#e04040" stroke-width="1.1"/><path d="M2.3 15 L9 9.5" stroke="#e04040" stroke-width="1"/></svg>
<span class="t" style="left:43px;top:480.69px;font-size:11px;color:#1f1f1f;">Письмо требует ручной обработки</span>
<svg class="a" style="left:22px;top:497px;" width="18" height="18" viewBox="0 0 18 18"><path d="M3 2.8 V0.8 H15.6 V10" fill="none" stroke="#222" stroke-width="1"/><rect x="0.8" y="3" width="13" height="10.6" fill="#fff" stroke="#222" stroke-width="1.2"/><path d="M0.8 3 L7.3 8.6 L13.8 3" fill="none" stroke="#222" stroke-width="1.1"/><path d="M10.5 11 L16.8 17.2 M16.8 11 L10.5 17.2" stroke="#e02424" stroke-width="1.6"/></svg>
<span class="t" style="left:43px;top:501.69px;font-size:11px;color:#1f1f1f;">Ошибки отправки</span>
<svg class="a" style="left:22px;top:518px;" width="18" height="18" viewBox="0 0 18 18"><path d="M6.5 1 C3.6 1 2.6 3.8 2.6 6.5 V10 L0.8 13.6 H12.2 L10.4 10 V6.5 C10.4 3.8 9.4 1 6.5 1 Z" fill="#f9d27a" stroke="#f08a1c" stroke-width="1.1"/><path d="M13.5 7.2 L14.6 8.6 L16.4 8.4 L16.7 10.2 L18 11.5 L16.7 12.8 L16.4 14.6 L14.6 14.4 L13.5 15.8 L12.4 14.4 L10.6 14.6 L10.3 12.8 L9 11.5 L10.3 10.2 L10.6 8.4 L12.4 8.6 Z" fill="#333"/><circle cx="13.5" cy="11.5" r="1.7" fill="#fff"/></svg>
<span class="t" style="left:43px;top:522.69px;font-size:11px;color:#1f1f1f;">Настройка уведомлений</span>
<div class="a" style="left:300px;top:93px;width:8px;height:770px;background:#f0f0f0"></div>
<div class="a" style="left:303px;top:472px;width:2px;height:2px;background:#4a4a4a"></div>
<div class="a" style="left:303px;top:476px;width:2px;height:2px;background:#4a4a4a"></div>
<div class="a" style="left:303px;top:480px;width:2px;height:2px;background:#4a4a4a"></div>
<div class="a" style="left:303px;top:484px;width:2px;height:2px;background:#4a4a4a"></div>
<div class="a" style="left:308px;top:120px;width:1407px;height:744px;background:#ffffff;border:1px solid #b4b4b4"></div>
<div class="a" style="left:312px;top:94px;width:68px;height:27px;background:#ffffff;border:1px solid #c8c8c8;border-bottom:none"></div>
<div class="a" style="left:313px;top:94px;width:66px;height:1px;background:#1a7ad4"></div>
<span class="t" style="left:317px;top:102.69px;font-size:11px;color:#1f1f1f;">Инциденты</span>
<div class="a" style="left:380px;top:120px;width:1334px;height:1px;background:#b4b4b4"></div>
<span class="t" style="left:385px;top:102.69px;font-size:11px;color:#1f1f1f;">Параметры критерия поиска</span>
<div class="a" style="left:309px;top:120px;width:3px;height:1px;background:#b4b4b4"></div>
<div class="a" style="left:312px;top:124px;width:1400px;height:26px;background:#efefef"></div>
<svg class="a" style="left:317px;top:128px;" width="17" height="17" viewBox="0 0 17 17"><path d="M14 8.5 A6 6 0 1 1 11.5 3.6" fill="none" stroke="#2eb6d0" stroke-width="1.4"/><path d="M9.5 1.3 L13 2.8 L11.5 6.5" fill="none" stroke="#2eb6d0" stroke-width="1.4"/></svg>
<div class="a" style="left:340px;top:127px;width:1px;height:20px;background:#d2d2d2"></div>
<span class="t" style="left:348px;top:130.84px;font-size:12px;color:#1f1f1f;transform:scaleX(0.9750);">Дата отправки</span>
<div class="a" style="left:431px;top:126px;width:100px;height:22px;background:#fff;border:1px solid #b6b6b6"></div>
<div class="a" style="left:513px;top:127px;width:1px;height:20px;background:#c8c8c8"></div>
<div class="a" style="left:514px;top:127px;width:16px;height:20px;background:#f0f0f0"></div>
<svg class="a" style="left:518px;top:134px;" width="8" height="5" viewBox="0 0 8 5"><path d="M0 0 H8 L4 4.5 Z" fill="#555"/></svg>
<span class="t" style="left:434px;top:130.84px;font-size:12px;color:#1f1f1f;transform:scaleX(0.9338);">Не задано</span>
<div class="a" style="left:535px;top:127px;width:1px;height:20px;background:#d2d2d2"></div>
<svg class="a" style="left:541px;top:129px;" width="17" height="17" viewBox="0 0 17 17"><path d="M7 12.2 H0.8 V0.9 H14.7 V9.5" fill="none" stroke="#9a9a9a" stroke-width="1.2"/><path d="M0.8 0.9 L7.7 6.6 L14.7 0.9" fill="none" stroke="#9a9a9a" stroke-width="1.1"/><path d="M7.5 12.6 H16.2 M13.8 10.2 L16.2 12.6 L13.8 15" fill="none" stroke="#a8a8a8" stroke-width="1"/></svg>
<span class="t" style="left:561px;top:130.84px;font-size:12px;color:#9b9b9b;transform:scaleX(0.9913);">Отправить</span>
<div class="a" style="left:627px;top:127px;width:1px;height:20px;background:#d2d2d2"></div>
<svg class="a" style="left:633px;top:129px;" width="17" height="16" viewBox="0 0 17 16"><rect x="4.8" y="3.8" width="11.4" height="9.6" fill="#fff" stroke="#333" stroke-width="1.2"/><path d="M0.5 4.8 H3 M0.5 7.3 H3 M0.5 9.8 H3 M0.5 12.3 H3" stroke="#c060c0" stroke-width="0.9"/><rect x="12.6" y="5.2" width="2" height="2" fill="#e83030"/><path d="M7.3 9.3 H10.3 M7.3 11.3 H8.8 M9.8 11.3 H11.8" stroke="#666" stroke-width="0.9"/></svg>
<span class="t" style="left:653px;top:130.84px;font-size:12px;color:#1f1f1f;transform:scaleX(0.9738);">Отправить уведомление</span>
<div class="a" style="left:795px;top:127px;width:1px;height:20px;background:#d2d2d2"></div>
<span class="t" style="left:802px;top:130.84px;font-size:12px;color:#1f1f1f;transform:scaleX(0.9929);">Отображать по:</span>
<div class="a" style="left:893px;top:126px;width:100px;height:22px;background:#fff;border:1px solid #b6b6b6"></div>
<div class="a" style="left:975px;top:127px;width:1px;height:20px;background:#c8c8c8"></div>
<div class="a" style="left:976px;top:127px;width:16px;height:20px;background:#f0f0f0"></div>
<svg class="a" style="left:980px;top:134px;" width="8" height="5" viewBox="0 0 8 5"><path d="M0 0 H8 L4 4.5 Z" fill="#555"/></svg>
<span class="t" style="left:896px;top:130.84px;font-size:12px;color:#1f1f1f;">50</span>
<div class="a" style="left:312px;top:156px;width:1400px;height:239px;background:#ffffff;border:1px solid #b4b4b4;border-bottom:none"></div>
<span class="t" style="left:320px;top:169.69px;font-size:11px;color:#a3a3a3;transform:scaleX(1.0223);">Перетащите сюда заголовок поля для группировки</span>
<div class="a" style="left:1694px;top:157px;width:17px;height:237px;background:#f0f0f0"></div>
<div class="a" style="left:1694px;top:203px;width:17px;height:87px;background:#cdcdcd"></div>
<svg class="a" style="left:1698px;top:163px;" width="10" height="7" viewBox="0 0 10 7"><path d="M1 6 L5 2 L9 6" fill="none" stroke="#606060" stroke-width="1.6"/></svg>
<svg class="a" style="left:1698px;top:381px;" width="10" height="7" viewBox="0 0 10 7"><path d="M1 1 L5 5 L9 1" fill="none" stroke="#606060" stroke-width="1.6"/></svg>
<div class="a" style="left:312px;top:192px;width:1382px;height:1px;background:#a9a9a9"></div>
<div class="a" style="left:312px;top:210px;width:1382px;height:1px;background:#a9a9a9"></div>
<div class="a" style="left:324px;top:193px;width:1px;height:17px;background:#a9a9a9"></div>
<div class="a" style="left:359px;top:193px;width:1px;height:17px;background:#a9a9a9"></div>
<div class="a" style="left:498px;top:193px;width:1px;height:17px;background:#a9a9a9"></div>
<div class="a" style="left:620px;top:193px;width:1px;height:17px;background:#a9a9a9"></div>
<div class="a" style="left:742px;top:193px;width:1px;height:17px;background:#a9a9a9"></div>
<div class="a" style="left:818px;top:193px;width:1px;height:17px;background:#a9a9a9"></div>
<div class="a" style="left:907px;top:193px;width:1px;height:17px;background:#a9a9a9"></div>
<div class="a" style="left:984px;top:193px;width:1px;height:17px;background:#a9a9a9"></div>
<div class="a" style="left:1178px;top:193px;width:1px;height:17px;background:#a9a9a9"></div>
<div class="a" style="left:1277px;top:193px;width:1px;height:17px;background:#a9a9a9"></div>
<div class="a" style="left:1388px;top:193px;width:1px;height:17px;background:#a9a9a9"></div>
<div class="a" style="left:1611px;top:193px;width:1px;height:17px;background:#a9a9a9"></div>
<div class="a" style="left:1693px;top:193px;width:1px;height:17px;background:#a9a9a9"></div>
<svg class="a" style="left:316px;top:197px;" width="8" height="8" viewBox="0 0 8 8"><path d="M4 0.5 V7.5 M0.5 4 H7.5 M1.5 1.5 L6.5 6.5 M6.5 1.5 L1.5 6.5" stroke="#444" stroke-width="1"/></svg>
<svg class="a" style="left:333px;top:193px;" width="18" height="18" viewBox="0 0 18 18"><path d="M1.5 10 L10 1.5 H16.5 V8 L8 16.5 Z" fill="none" stroke="#1f78c8" stroke-width="1.4" stroke-linejoin="round"/><circle cx="13.5" cy="4.6" r="1.1" fill="none" stroke="#1f78c8" stroke-width="1"/></svg>
<div class="a" style="left:361px;top:193.69px;width:137px;height:17px;overflow:hidden"><span class="t" style="left:0;top:3px;font-size:11px;color:#1f1f1f;">Статус</span></div>
<div class="a" style="left:500px;top:193.69px;width:120px;height:17px;overflow:hidden"><span class="t" style="left:0;top:3px;font-size:11px;color:#1f1f1f;">Дата перехвата</span></div>
<div class="a" style="left:622px;top:193.69px;width:120px;height:17px;overflow:hidden"><span class="t" style="left:0;top:3px;font-size:11px;color:#1f1f1f;">Компьютер</span></div>
<div class="a" style="left:744px;top:193.69px;width:74px;height:17px;overflow:hidden"><span class="t" style="left:0;top:3px;font-size:11px;color:#1f1f1f;">Кому</span></div>
<div class="a" style="left:820px;top:193.69px;width:87px;height:17px;overflow:hidden"><span class="t" style="left:0;top:3px;font-size:11px;color:#1f1f1f;">Пользователь</span></div>
<div class="a" style="left:909px;top:193.69px;width:75px;height:17px;overflow:hidden"><span class="t" style="left:0;top:3px;font-size:11px;color:#1f1f1f;">IP-адрес</span></div>
<div class="a" style="left:986px;top:193.69px;width:192px;height:17px;overflow:hidden"><span class="t" style="left:0;top:3px;font-size:11px;color:#1f1f1f;">Тема письма</span></div>
<div class="a" style="left:1180px;top:193.69px;width:97px;height:17px;overflow:hidden"><span class="t" style="left:0;top:3px;font-size:11px;color:#1f1f1f;">От кого</span></div>
<div class="a" style="left:1279px;top:193.69px;width:109px;height:17px;overflow:hidden"><span class="t" style="left:0;top:3px;font-size:11px;color:#1f1f1f;">От IP</span></div>
<div class="a" style="left:1390px;top:193.69px;width:221px;height:17px;overflow:hidden"><span class="t" style="left:0;top:3px;font-size:11px;color:#1f1f1f;">Порт</span></div>
<div class="a" style="left:1613px;top:193.69px;width:80px;height:17px;overflow:hidden"><span class="t" style="left:0;top:3px;font-size:11px;color:#1f1f1f;">Дата отправки</span></div>
<div class="a" style="left:312px;top:211px;width:1382px;height:183px;overflow:hidden">
<div class="a" style="left:13px;top:0px;width:1369px;height:18px;background:#f9f9f9"></div>
<div class="a" style="left:0;top:18px;width:1382px;height:1px;background:#dadada"></div>
<div class="a" style="left:13px;top:19px;width:1369px;height:18px;background:#ffffff"></div>
<div class="a" style="left:0;top:37px;width:1382px;height:1px;background:#dadada"></div>
<div class="a" style="left:13px;top:38px;width:1369px;height:18px;background:#f9f9f9"></div>
<div class="a" style="left:0;top:56px;width:1382px;height:1px;background:#dadada"></div>
<div class="a" style="left:13px;top:57px;width:1369px;height:18px;background:#ffffff"></div>
<div class="a" style="left:0;top:75px;width:1382px;height:1px;background:#dadada"></div>
<div class="a" style="left:13px;top:76px;width:1369px;height:18px;background:#f9f9f9"></div>
<div class="a" style="left:0;top:94px;width:1382px;height:1px;background:#dadada"></div>
<div class="a" style="left:13px;top:95px;width:1369px;height:18px;background:#ffffff"></div>
<div class="a" style="left:0;top:113px;width:1382px;height:1px;background:#dadada"></div>
<div class="a" style="left:13px;top:114px;width:1369px;height:18px;background:#cde4f7"></div>
<div class="a" style="left:0;top:132px;width:1382px;height:1px;background:#dadada"></div>
<div class="a" style="left:13px;top:133px;width:1369px;height:18px;background:#ffffff"></div>
<div class="a" style="left:0;top:151px;width:1382px;height:1px;background:#dadada"></div>
<div class="a" style="left:13px;top:152px;width:1369px;height:18px;background:#f9f9f9"></div>
<div class="a" style="left:0;top:170px;width:1382px;height:1px;background:#dadada"></div>
<div class="a" style="left:13px;top:171px;width:1369px;height:18px;background:#ffffff"></div>
<div class="a" style="left:0;top:189px;width:1382px;height:1px;background:#dadada"></div>
</div>
<div class="a" style="left:312px;top:211px;width:1px;height:183px;background:#a9a9a9"></div>
<div class="a" style="left:324px;top:211px;width:1px;height:183px;background:#a9a9a9"></div>
<div class="a" style="left:359px;top:211px;width:1px;height:183px;background:#dadada"></div>
<div class="a" style="left:498px;top:211px;width:1px;height:183px;background:#dadada"></div>
<div class="a" style="left:620px;top:211px;width:1px;height:183px;background:#dadada"></div>
<div class="a" style="left:742px;top:211px;width:1px;height:183px;background:#dadada"></div>
<div class="a" style="left:818px;top:211px;width:1px;height:183px;background:#dadada"></div>
<div class="a" style="left:907px;top:211px;width:1px;height:183px;background:#dadada"></div>
<div class="a" style="left:984px;top:211px;width:1px;height:183px;background:#dadada"></div>
<div class="a" style="left:1178px;top:211px;width:1px;height:183px;background:#dadada"></div>
<div class="a" style="left:1277px;top:211px;width:1px;height:183px;background:#dadada"></div>
<div class="a" style="left:1388px;top:211px;width:1px;height:183px;background:#dadada"></div>
<div class="a" style="left:1611px;top:211px;width:1px;height:183px;background:#dadada"></div>
<div class="a" style="left:1693px;top:211px;width:1px;height:183px;background:#dadada"></div>
<svg class="a" style="left:318px;top:330px;" width="5" height="8" viewBox="0 0 5 8"><path d="M0.5 0.5 L4.5 4 L0.5 7.5 Z" fill="#444"/></svg>
<div class="a" style="left:312px;top:211px;width:1382px;height:183px;overflow:hidden">
<svg class="a" style="left:50px;top:0px" width="18" height="18"><path d="M2.5 9.5 V16.3 H16.5 V7.5 L10.5 3" stroke="#222" stroke-width="1.3" fill="none"/><path d="M7.5 11.2 C10 12.2 12.5 11 16.5 7.5" stroke="#666" stroke-width="1.2" fill="none"/><path d="M5.5 1 V10 M1 5.5 H10 M2.3 2.3 L8.7 8.7 M8.7 2.3 L2.3 8.7" stroke="#f08a1c" stroke-width="1.2"/></svg>
<span class="t" style="left:70px;top:3.69px;font-size:11px;color:#1f1f1f;transform:scaleX(0.9662);">Нерассмотренные</span>
<div class="a" style="left:189px;top:0.69px;width:119px;height:17px;overflow:hidden"><span class="t" style="left:0;top:3px;font-size:11px;color:#1f1f1f;transform:scaleX(1.0105);">30.03.2021 15:57:30</span></div>
<div class="a" style="left:311px;top:0.69px;width:119px;height:17px;overflow:hidden"><span class="t" style="left:0;top:3px;font-size:11px;color:#1f1f1f;transform:scaleX(0.9946);">server-2016.sus.local</span></div>
<div class="a" style="left:433px;top:0.69px;width:73px;height:17px;overflow:hidden"><span class="t" style="left:0;top:3px;font-size:11px;color:#1f1f1f;transform:scaleX(1.0190);">&lt;sitestgmai@gmail.com&gt;</span></div>
<div class="a" style="left:509px;top:0.69px;width:86px;height:17px;overflow:hidden"><span class="t" style="left:0;top:3px;font-size:11px;color:#1f1f1f;transform:scaleX(0.9420);">adm@sus.local</span></div>
<div class="a" style="left:598px;top:0.69px;width:74px;height:17px;overflow:hidden"><span class="t" style="left:0;top:3px;font-size:11px;color:#1f1f1f;transform:scaleX(1.0701);">0.0.0.0</span></div>
<div class="a" style="left:675px;top:0.69px;width:191px;height:17px;overflow:hidden"><span class="t" style="left:0;top:3px;font-size:11px;color:#1f1f1f;">size</span></div>
<div class="a" style="left:869px;top:0.69px;width:96px;height:17px;overflow:hidden"><span class="t" style="left:0;top:3px;font-size:11px;color:#1f1f1f;transform:scaleX(0.9862);">&lt;adm@sus.local&gt;</span></div>
<div class="a" style="left:968px;top:0.69px;width:108px;height:17px;overflow:hidden"><span class="t" style="left:0;top:3px;font-size:11px;color:#1f1f1f;transform:scaleX(1.0402);">10.0.1.13,10.0.2.166</span></div>
<div class="a" style="left:1079px;top:0.69px;width:220px;height:17px;overflow:hidden"><span class="t" style="left:0;top:3px;font-size:11px;color:#1f1f1f;">0</span></div>
<div class="a" style="left:1302px;top:0.69px;width:79px;height:17px;overflow:hidden"><span class="t" style="left:0;top:3px;font-size:11px;color:#1f1f1f;transform:scaleX(1.0105);">30.03.2021 14:57:01</span></div>
<svg class="a" style="left:50px;top:19px" width="18" height="18"><path d="M2.5 9.5 V16.3 H16.5 V7.5 L10.5 3" stroke="#222" stroke-width="1.3" fill="none"/><path d="M7.5 11.2 C10 12.2 12.5 11 16.5 7.5" stroke="#666" stroke-width="1.2" fill="none"/><path d="M5.5 1 V10 M1 5.5 H10 M2.3 2.3 L8.7 8.7 M8.7 2.3 L2.3 8.7" stroke="#f08a1c" stroke-width="1.2"/></svg>
<span class="t" style="left:70px;top:22.69px;font-size:11px;color:#1f1f1f;transform:scaleX(0.9662);">Нерассмотренные</span>
<div class="a" style="left:189px;top:19.69px;width:119px;height:17px;overflow:hidden"><span class="t" style="left:0;top:3px;font-size:11px;color:#1f1f1f;transform:scaleX(1.0105);">30.03.2021 16:07:16</span></div>
<div class="a" style="left:311px;top:19.69px;width:119px;height:17px;overflow:hidden"><span class="t" style="left:0;top:3px;font-size:11px;color:#1f1f1f;transform:scaleX(0.9946);">server-2016.sus.local</span></div>
<div class="a" style="left:433px;top:19.69px;width:73px;height:17px;overflow:hidden"><span class="t" style="left:0;top:3px;font-size:11px;color:#1f1f1f;transform:scaleX(0.9630);">&lt;si@sus.local&gt;</span></div>
<div class="a" style="left:509px;top:19.69px;width:86px;height:17px;overflow:hidden"><span class="t" style="left:0;top:3px;font-size:11px;color:#1f1f1f;transform:scaleX(0.9420);">adm@sus.local</span></div>
<div class="a" style="left:598px;top:19.69px;width:74px;height:17px;overflow:hidden"><span class="t" style="left:0;top:3px;font-size:11px;color:#1f1f1f;transform:scaleX(1.0701);">0.0.0.0</span></div>
<div class="a" style="left:675px;top:19.69px;width:191px;height:17px;overflow:hidden"><span class="t" style="left:0;top:3px;font-size:11px;color:#1f1f1f;">siz2</span></div>
<div class="a" style="left:869px;top:19.69px;width:96px;height:17px;overflow:hidden"><span class="t" style="left:0;top:3px;font-size:11px;color:#1f1f1f;transform:scaleX(0.9862);">&lt;adm@sus.local&gt;</span></div>
<div class="a" style="left:968px;top:19.69px;width:108px;height:17px;overflow:hidden"><span class="t" style="left:0;top:3px;font-size:11px;color:#1f1f1f;transform:scaleX(1.0402);">10.0.1.13,10.0.2.166</span></div>
<div class="a" style="left:1079px;top:19.69px;width:220px;height:17px;overflow:hidden"><span class="t" style="left:0;top:3px;font-size:11px;color:#1f1f1f;">0</span></div>
<div class="a" style="left:1302px;top:19.69px;width:79px;height:17px;overflow:hidden"><span class="t" style="left:0;top:3px;font-size:11px;color:#1f1f1f;transform:scaleX(1.0105);">30.03.2021 15:06:44</span></div>
<svg class="a" style="left:50px;top:38px" width="18" height="18"><path d="M2.5 9.5 V16.3 H16.5 V7.5 L10.5 3" stroke="#222" stroke-width="1.3" fill="none"/><path d="M7.5 11.2 C10 12.2 12.5 11 16.5 7.5" stroke="#666" stroke-width="1.2" fill="none"/><path d="M5.5 1 V10 M1 5.5 H10 M2.3 2.3 L8.7 8.7 M8.7 2.3 L2.3 8.7" stroke="#f08a1c" stroke-width="1.2"/></svg>
<span class="t" style="left:70px;top:41.69px;font-size:11px;color:#1f1f1f;transform:scaleX(0.9662);">Нерассмотренные</span>
<div class="a" style="left:189px;top:38.69px;width:119px;height:17px;overflow:hidden"><span class="t" style="left:0;top:3px;font-size:11px;color:#1f1f1f;transform:scaleX(1.0105);">30.03.2021 16:22:13</span></div>
<div class="a" style="left:311px;top:38.69px;width:119px;height:17px;overflow:hidden"><span class="t" style="left:0;top:3px;font-size:11px;color:#1f1f1f;transform:scaleX(0.9946);">server-2016.sus.local</span></div>
<div class="a" style="left:433px;top:38.69px;width:73px;height:17px;overflow:hidden"><span class="t" style="left:0;top:3px;font-size:11px;color:#1f1f1f;transform:scaleX(0.9630);">&lt;si@sus.local&gt;</span></div>
<div class="a" style="left:509px;top:38.69px;width:86px;height:17px;overflow:hidden"><span class="t" style="left:0;top:3px;font-size:11px;color:#1f1f1f;transform:scaleX(0.9420);">adm@sus.local</span></div>
<div class="a" style="left:598px;top:38.69px;width:74px;height:17px;overflow:hidden"><span class="t" style="left:0;top:3px;font-size:11px;color:#1f1f1f;transform:scaleX(1.0701);">0.0.0.0</span></div>
<div class="a" style="left:675px;top:38.69px;width:191px;height:17px;overflow:hidden"><span class="t" style="left:0;top:3px;font-size:11px;color:#1f1f1f;">с грустью осознала</span></div>
<div class="a" style="left:869px;top:38.69px;width:96px;height:17px;overflow:hidden"><span class="t" style="left:0;top:3px;font-size:11px;color:#1f1f1f;transform:scaleX(0.9862);">&lt;adm@sus.local&gt;</span></div>
<div class="a" style="left:968px;top:38.69px;width:108px;height:17px;overflow:hidden"><span class="t" style="left:0;top:3px;font-size:11px;color:#1f1f1f;transform:scaleX(1.0402);">10.0.1.13,10.0.2.166</span></div>
<div class="a" style="left:1079px;top:38.69px;width:220px;height:17px;overflow:hidden"><span class="t" style="left:0;top:3px;font-size:11px;color:#1f1f1f;">0</span></div>
<div class="a" style="left:1302px;top:38.69px;width:79px;height:17px;overflow:hidden"><span class="t" style="left:0;top:3px;font-size:11px;color:#1f1f1f;transform:scaleX(1.0105);">30.03.2021 15:21:40</span></div>
<svg class="a" style="left:50px;top:57px" width="18" height="18"><path d="M2.5 9.5 V16.3 H16.5 V7.5 L10.5 3" stroke="#222" stroke-width="1.3" fill="none"/><path d="M7.5 11.2 C10 12.2 12.5 11 16.5 7.5" stroke="#666" stroke-width="1.2" fill="none"/><path d="M5.5 1 V10 M1 5.5 H10 M2.3 2.3 L8.7 8.7 M8.7 2.3 L2.3 8.7" stroke="#f08a1c" stroke-width="1.2"/></svg>
<span class="t" style="left:70px;top:60.69px;font-size:11px;color:#1f1f1f;transform:scaleX(0.9662);">Нерассмотренные</span>
<div class="a" style="left:189px;top:57.69px;width:119px;height:17px;overflow:hidden"><span class="t" style="left:0;top:3px;font-size:11px;color:#1f1f1f;transform:scaleX(1.0105);">30.03.2021 16:53:29</span></div>
<div class="a" style="left:311px;top:57.69px;width:119px;height:17px;overflow:hidden"><span class="t" style="left:0;top:3px;font-size:11px;color:#1f1f1f;transform:scaleX(0.9946);">server-2016.sus.local</span></div>
<div class="a" style="left:433px;top:57.69px;width:73px;height:17px;overflow:hidden"><span class="t" style="left:0;top:3px;font-size:11px;color:#1f1f1f;transform:scaleX(0.9630);">&lt;si@sus.local&gt;</span></div>
<div class="a" style="left:509px;top:57.69px;width:86px;height:17px;overflow:hidden"><span class="t" style="left:0;top:3px;font-size:11px;color:#1f1f1f;transform:scaleX(0.9420);">adm@sus.local</span></div>
<div class="a" style="left:598px;top:57.69px;width:74px;height:17px;overflow:hidden"><span class="t" style="left:0;top:3px;font-size:11px;color:#1f1f1f;transform:scaleX(1.0701);">0.0.0.0</span></div>
<div class="a" style="left:675px;top:57.69px;width:191px;height:17px;overflow:hidden"><span class="t" style="left:0;top:3px;font-size:11px;color:#1f1f1f;">123</span></div>
<div class="a" style="left:869px;top:57.69px;width:96px;height:17px;overflow:hidden"><span class="t" style="left:0;top:3px;font-size:11px;color:#1f1f1f;transform:scaleX(0.9862);">&lt;adm@sus.local&gt;</span></div>
<div class="a" style="left:968px;top:57.69px;width:108px;height:17px;overflow:hidden"><span class="t" style="left:0;top:3px;font-size:11px;color:#1f1f1f;transform:scaleX(1.0402);">10.0.1.13,10.0.2.166</span></div>
<div class="a" style="left:1079px;top:57.69px;width:220px;height:17px;overflow:hidden"><span class="t" style="left:0;top:3px;font-size:11px;color:#1f1f1f;">0</span></div>
<div class="a" style="left:1302px;top:57.69px;width:79px;height:17px;overflow:hidden"><span class="t" style="left:0;top:3px;font-size:11px;color:#1f1f1f;transform:scaleX(1.0105);">30.03.2021 15:52:55</span></div>
<svg class="a" style="left:50px;top:76px" width="18" height="18"><path d="M2.5 9.5 V16.3 H16.5 V7.5 L10.5 3" stroke="#222" stroke-width="1.3" fill="none"/><path d="M7.5 11.2 C10 12.2 12.5 11 16.5 7.5" stroke="#666" stroke-width="1.2" fill="none"/><path d="M5.5 1 V10 M1 5.5 H10 M2.3 2.3 L8.7 8.7 M8.7 2.3 L2.3 8.7" stroke="#f08a1c" stroke-width="1.2"/></svg>
<span class="t" style="left:70px;top:79.69px;font-size:11px;color:#1f1f1f;transform:scaleX(0.9662);">Нерассмотренные</span>
<div class="a" style="left:189px;top:76.69px;width:119px;height:17px;overflow:hidden"><span class="t" style="left:0;top:3px;font-size:11px;color:#1f1f1f;transform:scaleX(1.0105);">30.03.2021 16:55:38</span></div>
<div class="a" style="left:311px;top:76.69px;width:119px;height:17px;overflow:hidden"><span class="t" style="left:0;top:3px;font-size:11px;color:#1f1f1f;transform:scaleX(0.9946);">server-2016.sus.local</span></div>
<div class="a" style="left:433px;top:76.69px;width:73px;height:17px;overflow:hidden"><span class="t" style="left:0;top:3px;font-size:11px;color:#1f1f1f;transform:scaleX(0.9630);">&lt;si@sus.local&gt;</span></div>
<div class="a" style="left:509px;top:76.69px;width:86px;height:17px;overflow:hidden"><span class="t" style="left:0;top:3px;font-size:11px;color:#1f1f1f;transform:scaleX(0.9420);">adm@sus.local</span></div>
<div class="a" style="left:598px;top:76.69px;width:74px;height:17px;overflow:hidden"><span class="t" style="left:0;top:3px;font-size:11px;color:#1f1f1f;transform:scaleX(1.0701);">0.0.0.0</span></div>
<div class="a" style="left:675px;top:76.69px;width:191px;height:17px;overflow:hidden"><span class="t" style="left:0;top:3px;font-size:11px;color:#1f1f1f;">2222</span></div>
<div class="a" style="left:869px;top:76.69px;width:96px;height:17px;overflow:hidden"><span class="t" style="left:0;top:3px;font-size:11px;color:#1f1f1f;transform:scaleX(0.9862);">&lt;adm@sus.local&gt;</span></div>
<div class="a" style="left:968px;top:76.69px;width:108px;height:17px;overflow:hidden"><span class="t" style="left:0;top:3px;font-size:11px;color:#1f1f1f;transform:scaleX(1.0402);">10.0.1.13,10.0.2.166</span></div>
<div class="a" style="left:1079px;top:76.69px;width:220px;height:17px;overflow:hidden"><span class="t" style="left:0;top:3px;font-size:11px;color:#1f1f1f;">0</span></div>
<div class="a" style="left:1302px;top:76.69px;width:79px;height:17px;overflow:hidden"><span class="t" style="left:0;top:3px;font-size:11px;color:#1f1f1f;transform:scaleX(1.0105);">30.03.2021 15:55:05</span></div>
<svg class="a" style="left:50px;top:95px" width="18" height="18"><path d="M2.5 9.5 V16.3 H16.5 V7.5 L10.5 3" stroke="#222" stroke-width="1.3" fill="none"/><path d="M7.5 11.2 C10 12.2 12.5 11 16.5 7.5" stroke="#666" stroke-width="1.2" fill="none"/><path d="M5.5 1 V10 M1 5.5 H10 M2.3 2.3 L8.7 8.7 M8.7 2.3 L2.3 8.7" stroke="#f08a1c" stroke-width="1.2"/></svg>
<span class="t" style="left:70px;top:98.69px;font-size:11px;color:#1f1f1f;transform:scaleX(0.9662);">Нерассмотренные</span>
<div class="a" style="left:189px;top:95.69px;width:119px;height:17px;overflow:hidden"><span class="t" style="left:0;top:3px;font-size:11px;color:#1f1f1f;transform:scaleX(1.0187);">31.03.2021 11:53:47</span></div>
<div class="a" style="left:311px;top:95.69px;width:119px;height:17px;overflow:hidden"><span class="t" style="left:0;top:3px;font-size:11px;color:#1f1f1f;transform:scaleX(0.9946);">server-2016.sus.local</span></div>
<div class="a" style="left:433px;top:95.69px;width:73px;height:17px;overflow:hidden"><span class="t" style="left:0;top:3px;font-size:11px;color:#1f1f1f;transform:scaleX(0.9630);">&lt;si@sus.local&gt;</span></div>
<div class="a" style="left:509px;top:95.69px;width:86px;height:17px;overflow:hidden"><span class="t" style="left:0;top:3px;font-size:11px;color:#1f1f1f;transform:scaleX(0.9420);">adm@sus.local</span></div>
<div class="a" style="left:598px;top:95.69px;width:74px;height:17px;overflow:hidden"><span class="t" style="left:0;top:3px;font-size:11px;color:#1f1f1f;transform:scaleX(1.0701);">0.0.0.0</span></div>
<div class="a" style="left:675px;top:95.69px;width:191px;height:17px;overflow:hidden"><span class="t" style="left:0;top:3px;font-size:11px;color:#1f1f1f;">ТО 3 mb</span></div>
<div class="a" style="left:869px;top:95.69px;width:96px;height:17px;overflow:hidden"><span class="t" style="left:0;top:3px;font-size:11px;color:#1f1f1f;transform:scaleX(0.9862);">&lt;adm@sus.local&gt;</span></div>
<div class="a" style="left:968px;top:95.69px;width:108px;height:17px;overflow:hidden"><span class="t" style="left:0;top:3px;font-size:11px;color:#1f1f1f;transform:scaleX(1.0402);">10.0.1.13,10.0.2.166</span></div>
<div class="a" style="left:1079px;top:95.69px;width:220px;height:17px;overflow:hidden"><span class="t" style="left:0;top:3px;font-size:11px;color:#1f1f1f;">0</span></div>
<div class="a" style="left:1302px;top:95.69px;width:79px;height:17px;overflow:hidden"><span class="t" style="left:0;top:3px;font-size:11px;color:#1f1f1f;transform:scaleX(1.0105);">31.03.2021 10:53:13</span></div>
<svg class="a" style="left:50px;top:114px" width="18" height="18"><path d="M2.5 9.5 V16.3 H16.5 V7.5 L10.5 3" stroke="#222" stroke-width="1.3" fill="none"/><path d="M7.5 11.2 C10 12.2 12.5 11 16.5 7.5" stroke="#666" stroke-width="1.2" fill="none"/><path d="M5.5 1 V10 M1 5.5 H10 M2.3 2.3 L8.7 8.7 M8.7 2.3 L2.3 8.7" stroke="#f08a1c" stroke-width="1.2"/></svg>
<span class="t" style="left:70px;top:117.69px;font-size:11px;color:#1f1f1f;transform:scaleX(0.9662);">Нерассмотренные</span>
<div class="a" style="left:189px;top:114.69px;width:119px;height:17px;overflow:hidden"><span class="t" style="left:0;top:3px;font-size:11px;color:#1f1f1f;transform:scaleX(1.0187);">31.03.2021 11:57:30</span></div>
<div class="a" style="left:311px;top:114.69px;width:119px;height:17px;overflow:hidden"><span class="t" style="left:0;top:3px;font-size:11px;color:#1f1f1f;transform:scaleX(0.9946);">server-2016.sus.local</span></div>
<div class="a" style="left:433px;top:114.69px;width:73px;height:17px;overflow:hidden"><span class="t" style="left:0;top:3px;font-size:11px;color:#1f1f1f;transform:scaleX(0.9630);">&lt;si@sus.local&gt;</span></div>
<div class="a" style="left:509px;top:114.69px;width:86px;height:17px;overflow:hidden"><span class="t" style="left:0;top:3px;font-size:11px;color:#1f1f1f;transform:scaleX(0.9420);">adm@sus.local</span></div>
<div class="a" style="left:598px;top:114.69px;width:74px;height:17px;overflow:hidden"><span class="t" style="left:0;top:3px;font-size:11px;color:#1f1f1f;transform:scaleX(1.0701);">0.0.0.0</span></div>
<div class="a" style="left:675px;top:114.69px;width:191px;height:17px;overflow:hidden"><span class="t" style="left:0;top:3px;font-size:11px;color:#1f1f1f;">over 3 MB</span></div>
<div class="a" style="left:869px;top:114.69px;width:96px;height:17px;overflow:hidden"><span class="t" style="left:0;top:3px;font-size:11px;color:#1f1f1f;transform:scaleX(0.9862);">&lt;adm@sus.local&gt;</span></div>
<div class="a" style="left:968px;top:114.69px;width:108px;height:17px;overflow:hidden"><span class="t" style="left:0;top:3px;font-size:11px;color:#1f1f1f;transform:scaleX(1.0402);">10.0.1.13,10.0.2.166</span></div>
<div class="a" style="left:1079px;top:114.69px;width:220px;height:17px;overflow:hidden"><span class="t" style="left:0;top:3px;font-size:11px;color:#1f1f1f;">0</span></div>
<div class="a" style="left:1302px;top:114.69px;width:79px;height:17px;overflow:hidden"><span class="t" style="left:0;top:3px;font-size:11px;color:#1f1f1f;transform:scaleX(1.0105);">31.03.2021 10:56:58</span></div>
<svg class="a" style="left:50px;top:133px" width="18" height="18"><path d="M2.5 9.5 V16.3 H16.5 V7.5 L10.5 3" stroke="#222" stroke-width="1.3" fill="none"/><path d="M7.5 11.2 C10 12.2 12.5 11 16.5 7.5" stroke="#666" stroke-width="1.2" fill="none"/><path d="M5.5 1 V10 M1 5.5 H10 M2.3 2.3 L8.7 8.7 M8.7 2.3 L2.3 8.7" stroke="#f08a1c" stroke-width="1.2"/></svg>
<span class="t" style="left:70px;top:136.69px;font-size:11px;color:#1f1f1f;transform:scaleX(0.9662);">Нерассмотренные</span>
<div class="a" style="left:189px;top:133.69px;width:119px;height:17px;overflow:hidden"><span class="t" style="left:0;top:3px;font-size:11px;color:#1f1f1f;transform:scaleX(1.0105);">31.03.2021 14:40:56</span></div>
<div class="a" style="left:311px;top:133.69px;width:119px;height:17px;overflow:hidden"><span class="t" style="left:0;top:3px;font-size:11px;color:#1f1f1f;transform:scaleX(0.9946);">server-2016.sus.local</span></div>
<div class="a" style="left:433px;top:133.69px;width:73px;height:17px;overflow:hidden"><span class="t" style="left:0;top:3px;font-size:11px;color:#1f1f1f;transform:scaleX(0.9630);">&lt;si@sus.local&gt;</span></div>
<div class="a" style="left:509px;top:133.69px;width:86px;height:17px;overflow:hidden"><span class="t" style="left:0;top:3px;font-size:11px;color:#1f1f1f;transform:scaleX(0.9420);">adm@sus.local</span></div>
<div class="a" style="left:598px;top:133.69px;width:74px;height:17px;overflow:hidden"><span class="t" style="left:0;top:3px;font-size:11px;color:#1f1f1f;transform:scaleX(1.0701);">0.0.0.0</span></div>
<div class="a" style="left:675px;top:133.69px;width:191px;height:17px;overflow:hidden"><span class="t" style="left:0;top:3px;font-size:11px;color:#1f1f1f;">скобки (123)</span></div>
<div class="a" style="left:869px;top:133.69px;width:96px;height:17px;overflow:hidden"><span class="t" style="left:0;top:3px;font-size:11px;color:#1f1f1f;transform:scaleX(0.9862);">&lt;adm@sus.local&gt;</span></div>
<div class="a" style="left:968px;top:133.69px;width:108px;height:17px;overflow:hidden"><span class="t" style="left:0;top:3px;font-size:11px;color:#1f1f1f;transform:scaleX(1.0402);">10.0.1.13,10.0.2.166</span></div>
<div class="a" style="left:1079px;top:133.69px;width:220px;height:17px;overflow:hidden"><span class="t" style="left:0;top:3px;font-size:11px;color:#1f1f1f;">0</span></div>
<div class="a" style="left:1302px;top:133.69px;width:79px;height:17px;overflow:hidden"><span class="t" style="left:0;top:3px;font-size:11px;color:#1f1f1f;transform:scaleX(1.0105);">31.03.2021 13:40:22</span></div>
<svg class="a" style="left:50px;top:152px" width="18" height="18"><path d="M2.5 9.5 V16.3 H16.5 V7.5 L10.5 3" stroke="#222" stroke-width="1.3" fill="none"/><path d="M7.5 11.2 C10 12.2 12.5 11 16.5 7.5" stroke="#666" stroke-width="1.2" fill="none"/><path d="M5.5 1 V10 M1 5.5 H10 M2.3 2.3 L8.7 8.7 M8.7 2.3 L2.3 8.7" stroke="#f08a1c" stroke-width="1.2"/></svg>
<span class="t" style="left:70px;top:155.69px;font-size:11px;color:#1f1f1f;transform:scaleX(0.9662);">Нерассмотренные</span>
<div class="a" style="left:189px;top:152.69px;width:119px;height:17px;overflow:hidden"><span class="t" style="left:0;top:3px;font-size:11px;color:#1f1f1f;transform:scaleX(1.0105);">20.04.2021 19:30:59</span></div>
<div class="a" style="left:311px;top:152.69px;width:119px;height:17px;overflow:hidden"><span class="t" style="left:0;top:3px;font-size:11px;color:#1f1f1f;transform:scaleX(0.9946);">server-2016.sus.local</span></div>
<div class="a" style="left:433px;top:152.69px;width:73px;height:17px;overflow:hidden"><span class="t" style="left:0;top:3px;font-size:11px;color:#1f1f1f;transform:scaleX(0.9630);">&lt;si@sus.local&gt;</span></div>
<div class="a" style="left:509px;top:152.69px;width:86px;height:17px;overflow:hidden"><span class="t" style="left:0;top:3px;font-size:11px;color:#1f1f1f;transform:scaleX(0.9420);">adm@sus.local</span></div>
<div class="a" style="left:598px;top:152.69px;width:74px;height:17px;overflow:hidden"><span class="t" style="left:0;top:3px;font-size:11px;color:#1f1f1f;transform:scaleX(1.0701);">0.0.0.0</span></div>
<div class="a" style="left:675px;top:152.69px;width:191px;height:17px;overflow:hidden"><span class="t" style="left:0;top:3px;font-size:11px;color:#1f1f1f;">3333</span></div>
<div class="a" style="left:869px;top:152.69px;width:96px;height:17px;overflow:hidden"><span class="t" style="left:0;top:3px;font-size:11px;color:#1f1f1f;transform:scaleX(0.9862);">&lt;adm@sus.local&gt;</span></div>
<div class="a" style="left:968px;top:152.69px;width:108px;height:17px;overflow:hidden"><span class="t" style="left:0;top:3px;font-size:11px;color:#1f1f1f;transform:scaleX(1.0402);">10.0.1.13,10.0.2.166</span></div>
<div class="a" style="left:1079px;top:152.69px;width:220px;height:17px;overflow:hidden"><span class="t" style="left:0;top:3px;font-size:11px;color:#1f1f1f;">0</span></div>
<div class="a" style="left:1302px;top:152.69px;width:79px;height:17px;overflow:hidden"><span class="t" style="left:0;top:3px;font-size:11px;color:#1f1f1f;transform:scaleX(1.0105);">20.04.2021 18:30:25</span></div>
<svg class="a" style="left:50px;top:171px" width="18" height="18"><path d="M2.5 9.5 V16.3 H16.5 V7.5 L10.5 3" stroke="#222" stroke-width="1.3" fill="none"/><path d="M7.5 11.2 C10 12.2 12.5 11 16.5 7.5" stroke="#666" stroke-width="1.2" fill="none"/><path d="M5.5 1 V10 M1 5.5 H10 M2.3 2.3 L8.7 8.7 M8.7 2.3 L2.3 8.7" stroke="#f08a1c" stroke-width="1.2"/></svg>
<span class="t" style="left:70px;top:174.69px;font-size:11px;color:#1f1f1f;transform:scaleX(0.9662);">Нерассмотренные</span>
<div class="a" style="left:189px;top:171.69px;width:119px;height:17px;overflow:hidden"><span class="t" style="left:0;top:3px;font-size:11px;color:#1f1f1f;transform:scaleX(1.0105);">12.05.2021 18:55:22</span></div>
<div class="a" style="left:311px;top:171.69px;width:119px;height:17px;overflow:hidden"><span class="t" style="left:0;top:3px;font-size:11px;color:#1f1f1f;transform:scaleX(0.9946);">server-2016.sus.local</span></div>
<div class="a" style="left:433px;top:171.69px;width:73px;height:17px;overflow:hidden"><span class="t" style="left:0;top:3px;font-size:11px;color:#1f1f1f;transform:scaleX(1.0190);">&lt;sitestgmai@gmail.com&gt;</span></div>
<div class="a" style="left:509px;top:171.69px;width:86px;height:17px;overflow:hidden"><span class="t" style="left:0;top:3px;font-size:11px;color:#1f1f1f;transform:scaleX(0.9420);">adm@sus.local</span></div>
<div class="a" style="left:598px;top:171.69px;width:74px;height:17px;overflow:hidden"><span class="t" style="left:0;top:3px;font-size:11px;color:#1f1f1f;transform:scaleX(1.0701);">0.0.0.0</span></div>
<div class="a" style="left:675px;top:171.69px;width:191px;height:17px;overflow:hidden"><span class="t" style="left:0;top:3px;font-size:11px;color:#1f1f1f;">1111</span></div>
<div class="a" style="left:869px;top:171.69px;width:96px;height:17px;overflow:hidden"><span class="t" style="left:0;top:3px;font-size:11px;color:#1f1f1f;transform:scaleX(0.9862);">&lt;adm@sus.local&gt;</span></div>
<div class="a" style="left:968px;top:171.69px;width:108px;height:17px;overflow:hidden"><span class="t" style="left:0;top:3px;font-size:11px;color:#1f1f1f;transform:scaleX(1.0402);">10.0.1.13,10.0.2.166</span></div>
<div class="a" style="left:1079px;top:171.69px;width:220px;height:17px;overflow:hidden"><span class="t" style="left:0;top:3px;font-size:11px;color:#1f1f1f;">0</span></div>
<div class="a" style="left:1302px;top:171.69px;width:79px;height:17px;overflow:hidden"><span class="t" style="left:0;top:3px;font-size:11px;color:#1f1f1f;transform:scaleX(1.0105);">12.05.2021 17:54:49</span></div>
</div>
<div class="a" style="left:312px;top:394px;width:1400px;height:1px;background:#c4c4c4"></div>
<div class="a" style="left:316px;top:395px;width:928px;height:26px;background:#eeeeee"></div>
<div class="a" style="left:316px;top:395px;width:48px;height:26px;background:#ffffff"></div>
<div class="a" style="left:316px;top:419px;width:48px;height:2px;background:#2b88d8"></div>
<svg class="a" style="left:322px;top:398px;" width="18" height="18" viewBox="0 0 18 18"><path d="M9 15.8 H1 V6 L8.4 1 L15.8 6 V9.5" fill="none" stroke="#222" stroke-width="1.2"/><path d="M1.5 6.5 C4 8.5 6 10 8 10.3 C10 10.5 11.5 9.8 13.5 8.4" fill="none" stroke="#555" stroke-width="1.1"/><rect x="8.8" y="10.6" width="8.2" height="6.2" fill="#fff" stroke="#333" stroke-width="1.2"/><path d="M8.8 10.6 L12.9 13.6 L17 10.6" fill="none" stroke="#333" stroke-width="1"/></svg>
<span class="t" style="left:343px;top:402.69px;font-size:11px;color:#1f1f1f;">Все</span>
<svg class="a" style="left:369px;top:399px;" width="18" height="18" viewBox="0 0 18 18"><path d="M2.5 9.5 V16.3 H16.5 V7.5 L10.5 3" stroke="#222" stroke-width="1.3" fill="none"/><path d="M7.5 11.2 C10 12.2 12.5 11 16.5 7.5" stroke="#666" stroke-width="1.2" fill="none"/><path d="M5.5 1 V10 M1 5.5 H10 M2.3 2.3 L8.7 8.7 M8.7 2.3 L2.3 8.7" stroke="#f08a1c" stroke-width="1.2"/></svg>
<span class="t" style="left:392px;top:402.69px;font-size:11px;color:#1f1f1f;transform:scaleX(0.9662);">Нерассмотренные</span>
<svg class="a" style="left:494px;top:398px;" width="18" height="18" viewBox="0 0 18 18"><path d="M9 15.8 H1 V6 L8.4 1 L15.8 6 V9.5" fill="none" stroke="#222" stroke-width="1.2"/><path d="M1.5 6.5 C4 8.5 6 10 8 10.3 C10 10.5 11.5 9.8 13.5 8.4" fill="none" stroke="#555" stroke-width="1.1"/><rect x="10" y="11.6" width="6.6" height="5" fill="#fff" stroke="#f07d1e" stroke-width="1.2"/><path d="M11.6 11.6 V10.2 A1.7 1.7 0 0 1 15 10.2 V11.6" fill="none" stroke="#f07d1e" stroke-width="1.2"/><rect x="12.8" y="13.5" width="1" height="1.3" fill="#f07d1e"/></svg>
<span class="t" style="left:515px;top:402.69px;font-size:11px;color:#1f1f1f;">Блокированные</span>
<svg class="a" style="left:605px;top:398px;" width="18" height="18" viewBox="0 0 18 18"><path d="M9 15.8 H1 V6 L8.4 1 L15.8 6 V9.5" fill="none" stroke="#222" stroke-width="1.2"/><path d="M1.5 6.5 C4 8.5 6 10 8 10.3 C10 10.5 11.5 9.8 13.5 8.4" fill="none" stroke="#555" stroke-width="1.1"/><rect x="10" y="11.6" width="6.6" height="5" fill="#fff" stroke="#3cb05a" stroke-width="1.2"/><path d="M11.6 11.6 V10.2 A1.7 1.7 0 0 1 15 9.5" fill="none" stroke="#3cb05a" stroke-width="1.2"/></svg>
<span class="t" style="left:627px;top:402.69px;font-size:11px;color:#1f1f1f;">Разблокированные</span>
<svg class="a" style="left:735px;top:399px;" width="17" height="17" viewBox="0 0 17 17"><rect x="5.5" y="0.7" width="10" height="6" fill="none" stroke="#c050c0" stroke-width="1"/><path d="M5.5 0.7 L10.5 4 L15.5 0.7" fill="none" stroke="#c050c0" stroke-width="1"/><circle cx="5" cy="8" r="2.6" fill="none" stroke="#333" stroke-width="1.1"/><path d="M0.8 16 C0.8 12.5 3 11.3 5 11.3 C6.5 11.3 7.5 12 8 12.5" fill="none" stroke="#333" stroke-width="1.1"/><rect x="9.5" y="11" width="6.5" height="5.5" fill="#fff" stroke="#3cb05a" stroke-width="1.2"/></svg>
<span class="t" style="left:756px;top:402.69px;font-size:11px;color:#1f1f1f;">Разблокировано пользователем</span>
<svg class="a" style="left:929px;top:399px;" width="17" height="17" viewBox="0 0 17 17"><rect x="0.7" y="1.7" width="14" height="10.5" fill="none" stroke="#333" stroke-width="1.2"/><path d="M0.7 1.7 L7.7 7.5 L14.7 1.7" fill="none" stroke="#333" stroke-width="1.1"/><path d="M8 14.5 H16 M13.5 12 L16 14.5 L13.5 17" fill="none" stroke="#2f7cc0" stroke-width="1.2"/></svg>
<span class="t" style="left:951px;top:402.69px;font-size:11px;color:#1f1f1f;">Исходящие</span>
<svg class="a" style="left:1020px;top:399px;" width="17" height="17" viewBox="0 0 17 17"><rect x="0.7" y="1.7" width="14" height="10.5" fill="none" stroke="#333" stroke-width="1.2"/><path d="M0.7 1.7 L7.7 7.5 L14.7 1.7" fill="none" stroke="#333" stroke-width="1.1"/><path d="M12 9.5 L16.3 16.5 H7.7 Z" fill="#fff" stroke="#f07d1e" stroke-width="1.2"/></svg>
<span class="t" style="left:1041px;top:402.69px;font-size:11px;color:#1f1f1f;">Не отправленные</span>
<svg class="a" style="left:1142px;top:399px;" width="17" height="17" viewBox="0 0 17 17"><rect x="4.8" y="3.8" width="11.4" height="9.6" fill="#fff" stroke="#333" stroke-width="1.2"/><path d="M0.5 4.8 H3 M0.5 7.3 H3 M0.5 9.8 H3 M0.5 12.3 H3" stroke="#c060c0" stroke-width="0.9"/><rect x="12.6" y="5.2" width="2" height="2" fill="#e83030"/><path d="M7.3 9.3 H10.3 M7.3 11.3 H8.8 M9.8 11.3 H11.8" stroke="#666" stroke-width="0.9"/></svg>
<span class="t" style="left:1163px;top:402.69px;font-size:11px;color:#1f1f1f;">Отправленные</span>
<div class="a" style="left:309px;top:430px;width:1404px;height:26px;background:#efefef"></div>
<span class="t" style="left:890px;top:436.84px;font-size:12px;color:#1f1f1f;transform:scaleX(0.9526);">Страница:</span>
<svg class="a" style="left:950px;top:434px;" width="17" height="17" viewBox="0 0 17 17"><circle cx="8.5" cy="8.5" r="7.5" fill="none" stroke="#c4c4c4" stroke-width="1.1"/><path d="M12.5 8.5 H4.5 M8 5 L4.5 8.5 L8 12" fill="none" stroke="#c4c4c4" stroke-width="1.1"/></svg>
<div class="a" style="left:971px;top:432px;width:52px;height:22px;background:#fff;border:1px solid #b6b6b6"></div>
<span class="t" style="left:975px;top:436.84px;font-size:12px;color:#1f1f1f;">1 / 1</span>
<svg class="a" style="left:1025px;top:434px;" width="17" height="17" viewBox="0 0 17 17"><circle cx="8.5" cy="8.5" r="7.5" fill="none" stroke="#2f8fde" stroke-width="1.2"/><path d="M4.5 8.5 H12.5 M9 5 L12.5 8.5 L9 12" fill="none" stroke="#2f8fde" stroke-width="1.2"/></svg>
<div class="a" style="left:1003px;top:461px;width:2px;height:2px;background:#555"></div>
<div class="a" style="left:1007px;top:461px;width:2px;height:2px;background:#555"></div>
<div class="a" style="left:1011px;top:461px;width:2px;height:2px;background:#555"></div>
<div class="a" style="left:1015px;top:461px;width:2px;height:2px;background:#555"></div>
<div class="a" style="left:1019px;top:461px;width:2px;height:2px;background:#555"></div>
<div class="a" style="left:316px;top:471px;width:1392px;height:1px;background:#c8c8c8"></div>
<span class="t" style="left:361px;top:480.84px;font-size:12px;color:#1f1f1f;transform:scaleX(0.9855);">От кого:</span>
<span class="t" style="left:410.5px;top:480.84px;font-size:12px;color:#1f1f1f;transform:scaleX(0.9933);">&quot;Админ&quot; &lt;adm@sus.local&gt;</span>
<span class="t" style="left:373px;top:502.84px;font-size:12px;color:#1f1f1f;transform:scaleX(0.9876);">Кому:</span>
<span class="t" style="left:410.5px;top:502.84px;font-size:12px;color:#1f1f1f;transform:scaleX(0.9628);">&quot;Si_Пользователь&quot; &lt;si@sus.local&gt;</span>
<span class="t" style="left:331.4px;top:524.84px;font-size:12px;color:#1f1f1f;transform:scaleX(0.9640);">Тема письма:</span>
<span class="t" style="left:410.5px;top:524.84px;font-size:12px;color:#1f1f1f;transform:scaleX(0.9509);">over 3 MB</span>
<div class="a" style="left:1605px;top:474px;width:1px;height:73px;background:#d0d0d0"></div>
<div class="a" style="left:1608px;top:503px;width:100px;height:1px;background:#d0d0d0"></div>
<span class="t" style="left:1148px;width:1000px;text-align:center;top:479.84px;font-size:12px;color:#1f1f1f;transform-origin:50% 0;">8</span>
<svg class="a" style="left:1655px;top:479px;" width="14" height="15" viewBox="0 0 14 15"><path d="M3.5 13.5 L11.5 5.5 C12.8 4.2 12.8 2.2 11.5 1 C10.2 -0.2 8.3 -0.1 7 1.2 L1.8 6.6 C0.2 8.3 0.3 10.8 1.8 12.4 C3.3 13.9 5.8 13.9 7.3 12.4 L11.8 7.8 M5 10.3 L10 5.3 C10.6 4.7 10.6 3.7 10 3.1 C9.4 2.5 8.4 2.5 7.8 3.1 L3 8" fill="none" stroke="#2f8fde" stroke-width="1.1"/></svg>
<span class="t" style="left:1621px;top:512.84px;font-size:12px;color:#1f1f1f;transform:scaleX(0.8991);">31.03.21 10:56</span>
<span class="t" style="left:1641.4px;top:527.84px;font-size:12px;color:#1f1f1f;transform:scaleX(0.9156);">среда</span>
<div class="a" style="left:316px;top:550px;width:1392px;height:1px;background:#c8c8c8"></div>
<svg class="a" style="left:319px;top:558px;" width="16" height="12" viewBox="0 0 16 12"><rect x="0" y="0" width="15.2" height="11" fill="#7ba0cc"/><path d="M0.8 0.8 L6.5 5.5 H8.7 L14.4 0.8 M0.8 10.2 L6.5 5.5 M8.7 5.5 L14.4 10.2" fill="none" stroke="#fff" stroke-width="0.9"/></svg>
<span class="t" style="left:339px;top:557.84px;font-size:12px;color:#0f6448;transform:scaleX(0.9845);">Сообщение</span>
<svg class="a" style="left:411px;top:558px;" width="14" height="12" viewBox="0 0 14 12"><rect x="0.5" y="0.5" width="13" height="10.5" fill="#fff" stroke="#b4b4b4"/><rect x="2" y="2" width="10" height="7.5" fill="#9cc8ee"/><path d="M2 6.5 C5 4.5 8 5 12 7 V9.5 H2 Z" fill="#6f9a7a"/></svg>
<span class="t" style="left:430px;top:557.84px;font-size:12px;color:#1f1f1f;transform:scaleX(0.9050);">Viber.JPG</span>
<svg class="a" style="left:485px;top:562px;" width="6" height="4" viewBox="0 0 6 4"><path d="M0 0 H6 L3 3.5 Z" fill="#333"/></svg>
<svg class="a" style="left:499px;top:556px;" width="13" height="16" viewBox="0 0 13 16"><path d="M0.6 0.6 H9 L12.4 4 V15.4 H0.6 Z" fill="#fff" stroke="#f07d1e" stroke-width="1.1"/><path d="M9 0.6 V4 H12.4" fill="#f07d1e"/><text x="6.3" y="8.5" font-size="6.5" font-weight="bold" fill="#f07d1e" text-anchor="middle" font-family="Liberation Sans">G</text><text x="6.5" y="13.5" font-size="3.8" fill="#f07d1e" text-anchor="middle" font-family="Liberation Sans">PDF</text></svg>
<span class="t" style="left:517px;top:557.84px;font-size:12px;color:#1f1f1f;transform:scaleX(1.0232);">Админ Админский.pdf</span>
<svg class="a" style="left:647px;top:562px;" width="6" height="4" viewBox="0 0 6 4"><path d="M0 0 H6 L3 3.5 Z" fill="#333"/></svg>
<svg class="a" style="left:661px;top:556px;" width="13" height="16" viewBox="0 0 13 16"><path d="M0.6 0.6 H9 L12.4 4 V15.4 H0.6 Z" fill="#fff" stroke="#f07d1e" stroke-width="1.1"/><path d="M9 0.6 V4 H12.4" fill="#f07d1e"/><text x="6.3" y="8.5" font-size="6.5" font-weight="bold" fill="#f07d1e" text-anchor="middle" font-family="Liberation Sans">G</text><text x="6.5" y="13.5" font-size="3.8" fill="#f07d1e" text-anchor="middle" font-family="Liberation Sans">PDF</text></svg>
<span class="t" style="left:679.3px;top:557.84px;font-size:12px;color:#1f1f1f;transform:scaleX(0.9867);">arabic.pdf</span>
<svg class="a" style="left:738px;top:562px;" width="6" height="4" viewBox="0 0 6 4"><path d="M0 0 H6 L3 3.5 Z" fill="#333"/></svg>
<svg class="a" style="left:752px;top:556px;" width="13" height="16" viewBox="0 0 13 16"><path d="M0.6 0.6 H9 L12.4 4 V15.4 H0.6 Z" fill="#fff" stroke="#f07d1e" stroke-width="1.1"/><path d="M9 0.6 V4 H12.4" fill="#f07d1e"/><text x="6.3" y="8.5" font-size="6.5" font-weight="bold" fill="#f07d1e" text-anchor="middle" font-family="Liberation Sans">G</text><text x="6.5" y="13.5" font-size="3.8" fill="#f07d1e" text-anchor="middle" font-family="Liberation Sans">PDF</text></svg>
<span class="t" style="left:770px;top:557.84px;font-size:12px;color:#1f1f1f;transform:scaleX(0.9089);">Print_2020_02_28_16_02_27_adm_sus.local_115.53.31221.pdf</span>
<svg class="a" style="left:1085px;top:562px;" width="6" height="4" viewBox="0 0 6 4"><path d="M0 0 H6 L3 3.5 Z" fill="#333"/></svg>
<div class="a" style="left:1095px;top:553px;width:525px;height:22px;background:#cccccc"></div>
<svg class="a" style="left:1100px;top:556px;" width="13" height="16" viewBox="0 0 13 16"><path d="M0.6 0.6 H9 L12.4 4 V15.4 H0.6 Z" fill="#fff" stroke="#f07d1e" stroke-width="1.1"/><path d="M9 0.6 V4 H12.4" fill="#f07d1e"/><text x="6.3" y="8.5" font-size="6.5" font-weight="bold" fill="#f07d1e" text-anchor="middle" font-family="Liberation Sans">G</text><text x="6.5" y="13.5" font-size="3.8" fill="#f07d1e" text-anchor="middle" font-family="Liberation Sans">PDF</text></svg>
<span class="t" style="left:1118.6px;top:557.84px;font-size:12px;color:#1f1f1f;transform:scaleX(0.9334);">data_text_html;charset_utf_8;base64,PGh...dllHRpaWY8L3ByZT48L2JvZHk_PC9odG1sPg__.pdf</span>
<svg class="a" style="left:1610px;top:562px;" width="6" height="4" viewBox="0 0 6 4"><path d="M0 0 H6 L3 3.5 Z" fill="#333"/></svg>
<div class="a" style="left:1697px;top:553px;width:11px;height:22px;background:#ececec"></div>
<svg class="a" style="left:1698px;top:561px;" width="9" height="6" viewBox="0 0 9 6"><path d="M0.8 0.8 L4.5 4.5 L8.2 0.8" fill="none" stroke="#555" stroke-width="1.4"/></svg>
<div class="a" style="left:316px;top:578px;width:1392px;height:1px;background:#c8c8c8"></div>
<div class="a" style="left:519px;top:581px;width:1px;height:282px;background:#b4b4b4"></div>
<span class="t" style="left:323px;top:589.84px;font-size:12px;color:#1f1f1f;transform:scaleX(1.0118);">Критерий поиска</span>
<div class="a" style="left:316px;top:611px;width:200px;height:19px;background:#fff;border:1px solid #c4c4c4;border-left:none"></div>
<span class="t" style="left:319px;top:614.84px;font-size:12px;color:#1f1f1f;transform:scaleX(0.9369);">с грустью осознала (Сообщение)</span>
<div class="a" style="left:316px;top:803px;width:200px;height:1px;background:#9a9a9a"></div>
<span class="t" style="left:318px;top:806.84px;font-size:12px;color:#1f1f1f;transform:scaleX(0.9661);">Перехвачено:</span>
<span class="t" style="left:428px;top:806.84px;font-size:12px;color:#1f1f1f;transform:scaleX(0.9082);">31.03.2021 11:...</span>
<span class="t" style="left:318px;top:825.84px;font-size:12px;color:#1f1f1f;transform:scaleX(0.9677);">Разблокированные</span>
<span class="t" style="left:428px;top:825.84px;font-size:12px;color:#1f1f1f;">-</span>
<span class="t" style="left:318px;top:844.84px;font-size:12px;color:#1f1f1f;transform:scaleX(0.9649);">Состояние:</span>
<span class="t" style="left:428px;top:844.84px;font-size:12px;color:#1f1f1f;transform:scaleX(0.9648);">Письмо не об...</span>
<svg class="a" style="left:530px;top:588px;" width="16" height="16" viewBox="0 0 16 16"><path d="M0.6 0.6 H15.4 V15.4 H2.2 L0.6 13.8 Z" fill="#f2dcf2" stroke="#c070c0" stroke-width="1.1"/><rect x="3.6" y="0.6" width="8.8" height="6.4" fill="#fff" stroke="#c070c0" stroke-width="1"/><rect x="5" y="10" width="6.2" height="5.4" fill="#fff" stroke="#c070c0" stroke-width="1"/><rect x="6.6" y="11.6" width="0.9" height="2" fill="#777"/></svg>
<svg class="a" style="left:553px;top:588px;" width="17" height="17" viewBox="0 0 17 17"><rect x="3.5" y="0.6" width="9.8" height="5.2" fill="#fff" stroke="#606060" stroke-width="1.1"/><rect x="0.6" y="5" width="15.6" height="7.2" fill="#bcdcf4" stroke="#3b8fd6" stroke-width="1.1"/><rect x="2.2" y="6.6" width="1.4" height="0.9" fill="#3b8fd6"/><rect x="3.5" y="9" width="9.8" height="7.2" fill="#fff" stroke="#606060" stroke-width="1.1"/><path d="M5 11.5 H12 M5 13.5 H12" stroke="#777" stroke-width="0.9"/></svg>
<div class="a" style="left:576px;top:586px;width:1px;height:20px;background:#c0c0c0"></div>
<div class="a" style="left:580px;top:585px;width:23px;height:22px;background:#b7d9f3"></div>
<svg class="a" style="left:583px;top:588px;" width="17" height="17" viewBox="0 0 17 17"><rect x="0.7" y="4" width="15.3" height="8.3" fill="#fff" stroke="#222" stroke-width="1.3"/><rect x="2.7" y="5.8" width="9" height="4.6" fill="#b7d9f3" stroke="#1f6fc4" stroke-width="1.1"/><rect x="9.5" y="3" width="2.5" height="10.5" fill="#fff"/><path d="M8 0.8 C9.5 0.8 10.5 1.2 10.8 2.5 V14 C10.5 15.3 9.5 15.7 8 15.7 M13.6 0.8 C12.1 0.8 11.1 1.2 10.8 2.5 M13.6 15.7 C12.1 15.7 11.1 15.3 10.8 14" fill="none" stroke="#333" stroke-width="1.1"/></svg>
<svg class="a" style="left:606px;top:588px;" width="17" height="17" viewBox="0 0 17 17"><path d="M16.2 0.5 C15.8 4 14.5 6.5 12 8.5 L6.5 13.5 C5.5 14.5 4 15.5 2 16 C1.3 16 1 15.3 1.8 14.7 L6 11 L3 11.2 C1.8 11.2 1.5 10 2.5 9.6 L5 8.6 C4.2 7.8 3.5 6.5 4.5 5.5 C6.5 3.5 9 1.5 12 0.5 Z" fill="#fae3cd" stroke="#e0a070" stroke-width="1"/><path d="M5 8.6 L8 7.5 M6 11 L9.5 9.5" stroke="#e0a070" stroke-width="0.8"/></svg>
<svg class="a" style="left:629px;top:588px;" width="16" height="17" viewBox="0 0 16 17"><rect x="0.8" y="0.8" width="14.2" height="15" fill="none" stroke="#222" stroke-width="1.3" stroke-dasharray="1.8 1.4"/><rect x="3.5" y="3.5" width="9" height="9.5" fill="#5e8fc8" stroke="#8ab0da" stroke-width="0.6"/></svg>
<div class="a" style="left:652px;top:586px;width:1px;height:20px;background:#c0c0c0"></div>
<svg class="a" style="left:659px;top:589px;" width="16" height="15" viewBox="0 0 16 15"><path d="M6.2 4 V13.3 H0.6 Z" fill="#edc6ed" stroke="#c070c0" stroke-width="1"/><path d="M7.6 8.5 L14.5 13.3 H7.6 Z" fill="#e4e4e4" stroke="#555" stroke-width="1.1"/><path d="M12 6 V3.8 C12 2.5 11.2 1.8 10 1.8 H8 M9.6 0.2 L8 1.8 L9.6 3.4" fill="none" stroke="#3b9ae0" stroke-width="1.1"/></svg>
<svg class="a" style="left:683px;top:589px;" width="16" height="15" viewBox="0 0 16 15"><path d="M9.8 4 V13.3 H15.4 Z" fill="#edc6ed" stroke="#c070c0" stroke-width="1"/><path d="M8.4 8.5 L1.5 13.3 H8.4 Z" fill="#e4e4e4" stroke="#555" stroke-width="1.1"/><path d="M4 6 V3.8 C4 2.5 4.8 1.8 6 1.8 H8 M6.4 0.2 L8 1.8 L6.4 3.4" fill="none" stroke="#3b9ae0" stroke-width="1.1"/></svg>
<div class="a" style="left:705px;top:586px;width:1px;height:20px;background:#c0c0c0"></div>
<svg class="a" style="left:711px;top:587px;" width="18" height="18" viewBox="0 0 18 18"><circle cx="7.5" cy="7.5" r="6.2" fill="none" stroke="#444" stroke-width="1.1"/><path d="M7.5 4 V11 M4 7.5 H11" stroke="#3b9ae0" stroke-width="1.2"/><path d="M11.8 11.8 L16.5 16.5" stroke="#444" stroke-width="1.3"/></svg>
<svg class="a" style="left:735px;top:587px;" width="18" height="18" viewBox="0 0 18 18"><circle cx="7.5" cy="7.5" r="6.2" fill="none" stroke="#444" stroke-width="1.1"/><path d="M4 7.5 H11" stroke="#3b9ae0" stroke-width="1.2"/><path d="M11.8 11.8 L16.5 16.5" stroke="#444" stroke-width="1.3"/></svg>
<svg class="a" style="left:758px;top:587px;" width="25" height="18" viewBox="0 0 25 18"><circle cx="9.5" cy="7" r="6" fill="none" stroke="#3b9ae0" stroke-width="1.2"/><path d="M5.3 11.3 L0.8 16" stroke="#3b9ae0" stroke-width="1.3"/><path d="M18.5 6.5 H24 L21.3 9.3 Z" fill="#222"/></svg>
<div class="a" style="left:791px;top:586px;width:1px;height:20px;background:#c0c0c0"></div>
<svg class="a" style="left:798px;top:588px;" width="17" height="17" viewBox="0 0 17 17"><rect x="0.6" y="7" width="5.6" height="9.4" fill="#e4e4e4" stroke="#555" stroke-width="1.1"/><rect x="10.8" y="7" width="5.6" height="9.4" fill="#e4e4e4" stroke="#555" stroke-width="1.1"/><rect x="1.8" y="2.5" width="3.4" height="5" fill="#e4e4e4" stroke="#555" stroke-width="1"/><rect x="11.8" y="2.5" width="3.4" height="5" fill="#e4e4e4" stroke="#555" stroke-width="1"/><rect x="2.5" y="0.5" width="2" height="2" fill="#777"/><rect x="12.5" y="0.5" width="2" height="2" fill="#777"/><path d="M6 9 H11" stroke="#555" stroke-width="1.4"/><rect x="2.8" y="10.5" width="1.2" height="3.5" fill="#555"/><rect x="13" y="10.5" width="1.2" height="3.5" fill="#555"/><rect x="3" y="4" width="1" height="2" fill="#555"/><rect x="13" y="4" width="1" height="2" fill="#555"/></svg>
<div class="a" style="left:527px;top:608px;width:1177px;height:1px;background:#c0c0c0"></div>
<div class="a" style="left:520px;top:609px;width:1191px;height:253px;background:#ffffff"></div>
<div class="a" style="left:581px;top:613px;width:1105px;height:218px;background:linear-gradient(to bottom,#ffffff 0%,#f4f4f4 60%,#eeeeee 100%)"></div>
<svg class="a" style="left:545px;top:622px;" width="23" height="25" viewBox="0 0 23 25"><path d="M6 5 V0.8 H17 V4.5 H21.5 V17.5 H17" fill="none" stroke="#666" stroke-width="1.6"/><rect x="0.8" y="6.5" width="15" height="17.5" fill="none" stroke="#666" stroke-width="1.6"/></svg>
<div class="a" style="left:735px;top:615px;width:797px;height:216px;background:#ffffff;border:1px solid #0a70c8;border-bottom:none"></div>
<div class="a" style="left:784px;top:664px;width:701px;height:122px;border:1px solid #bdbdbd"></div>
<span class="t" style="left:788px;top:668.58px;font-size:16px;color:#111111;font-family:'Liberation Serif',serif;">От кого: sitestgmai@gmail.com sitestgmai</span>
<span class="t" style="left:788px;top:692.58px;font-size:16px;color:#111111;font-family:'Liberation Serif',serif;">Кому: sitestgmai@gmail.com</span>
<span class="t" style="left:788px;top:716.58px;font-size:16px;color:#111111;font-family:'Liberation Serif',serif;">Тема письма: multipage tiif</span>
<span class="t" style="left:788px;top:740.58px;font-size:16px;color:#111111;font-family:'Liberation Serif',serif;">Дата создания: 25.01.2019 19:27:59</span>
<span class="t" style="left:788px;top:764.58px;font-size:16px;color:#111111;font-family:'Liberation Serif',serif;">Дата перехвата: 25.01.2019 20:28:00</span>
<div class="a" style="left:784px;top:794px;width:701px;height:2px;background:#6e6e6e"></div>
<span class="t" style="left:784px;top:810.42px;font-size:13px;color:#111111;font-family:'Liberation Mono',monospace;transform:scaleX(0.9064);">multipage tiif</span>
<div class="a" style="left:1686px;top:613px;width:17px;height:218px;background:#f0f0f0"></div>
<div class="a" style="left:1686px;top:628px;width:17px;height:36px;background:#cdcdcd"></div>
<svg class="a" style="left:1690px;top:618px;" width="10" height="7" viewBox="0 0 10 7"><path d="M1 6 L5 2 L9 6" fill="none" stroke="#606060" stroke-width="1.6"/></svg>
<svg class="a" style="left:1690px;top:820px;" width="10" height="7" viewBox="0 0 10 7"><path d="M1 1 L5 5 L9 1" fill="none" stroke="#606060" stroke-width="1.6"/></svg>
<span class="t" style="left:536px;top:842.84px;font-size:12px;color:#1f6fc4;transform:scaleX(0.9930);">Родной формат</span>
<div class="a" style="left:631px;top:836px;width:1px;height:25px;background:#d0d0d0"></div>
<span class="t" style="left:641px;top:842.84px;font-size:12px;color:#1f1f1f;transform:scaleX(1.0089);">Только текст</span>
<div class="a" style="left:720px;top:836px;width:1px;height:25px;background:#d0d0d0"></div>
<span class="t" style="left:730px;top:842.84px;font-size:12px;color:#1f1f1f;transform:scaleX(1.0123);">Атрибуты</span>
<div class="a" style="left:792px;top:836px;width:1px;height:25px;background:#d0d0d0"></div>
<span class="t" style="left:801px;top:842.84px;font-size:12px;color:#1f1f1f;transform:scaleX(1.0275);">Журнал</span>
<div class="a" style="left:854px;top:836px;width:1px;height:25px;background:#d0d0d0"></div>
<span class="t" style="left:864px;top:842.84px;font-size:12px;color:#1f1f1f;transform:scaleX(1.0050);">Резюме поиска</span>
<div class="a" style="left:957px;top:836px;width:1px;height:25px;background:#d0d0d0"></div>
<div class="a" style="left:1095px;top:576px;width:159px;height:84px;background:#ffffff;border:1px solid #b8b8b8;box-shadow:2px 3px 4px rgba(0,0,0,0.28)"></div>
<svg class="a" style="left:1102px;top:582px;" width="16" height="17" viewBox="0 0 16 17"><path d="M0.6 0.6 H8.5 L12.5 4.6 V9 M8.5 0.6 V4.6 H12.5 M6 15.5 H0.6 V0.6" fill="none" stroke="#3b8fd6" stroke-width="1.1"/><path d="M7 16.5 L9.5 11 L12.5 9.5 L15.5 10.5 L12 13 Z" fill="#f6c09a" stroke="#f08a3c" stroke-width="1"/></svg>
<span class="t" style="left:1132px;top:583.84px;font-size:12px;color:#1f1f1f;transform:scaleX(0.9970);">Открыть</span>
<div class="a" style="left:1127px;top:604px;width:118px;height:1px;background:#d5d5d5"></div>
<svg class="a" style="left:1102px;top:611px;" width="16" height="16" viewBox="0 0 16 16"><path d="M0.6 0.6 H15.4 V15.4 H2.2 L0.6 13.8 Z" fill="#f2dcf2" stroke="#c070c0" stroke-width="1.1"/><rect x="3.6" y="0.6" width="8.8" height="6.4" fill="#fff" stroke="#c070c0" stroke-width="1"/><rect x="5" y="10" width="6.2" height="5.4" fill="#fff" stroke="#c070c0" stroke-width="1"/><rect x="6.6" y="11.6" width="0.9" height="2" fill="#777"/></svg>
<span class="t" style="left:1132px;top:612.84px;font-size:12px;color:#1f1f1f;transform:scaleX(0.9623);">Сохранить как...</span>
<svg class="a" style="left:1102px;top:637px;" width="16" height="16" viewBox="0 0 16 16"><path d="M4 3.5 V0.6 H15.4 V12 H12.5 M2.5 5 V2 H13.9 V13.4" fill="none" stroke="#c068c0" stroke-width="1"/><path d="M0.6 4.6 H12 V15.4 H2.5 L0.6 13.5 Z" fill="#efd5ef" stroke="#c068c0" stroke-width="1.1"/><rect x="3" y="10" width="6" height="5.3" fill="#fff" stroke="#c068c0" stroke-width="0.9"/></svg>
<span class="t" style="left:1132px;top:638.84px;font-size:12px;color:#1f1f1f;transform:scaleX(0.9468);">Сохранить все...</span>
<svg class="a" style="left:1114px;top:566px;" width="17" height="28" viewBox="0 0 17 28"><path d="M1 1 V20 L5.5 15.5 L9 23.5 L12.5 22 L9 14.3 H15 Z" fill="#f4f4f4" stroke="#111" stroke-width="1.3" stroke-linejoin="round"/></svg>
<div class="a" style="left:0px;top:869px;width:1716px;height:1px;background:#b4b4b4"></div>
<div class="a" style="left:0px;top:870px;width:1716px;height:16px;background:#efefef"></div></body></html>
